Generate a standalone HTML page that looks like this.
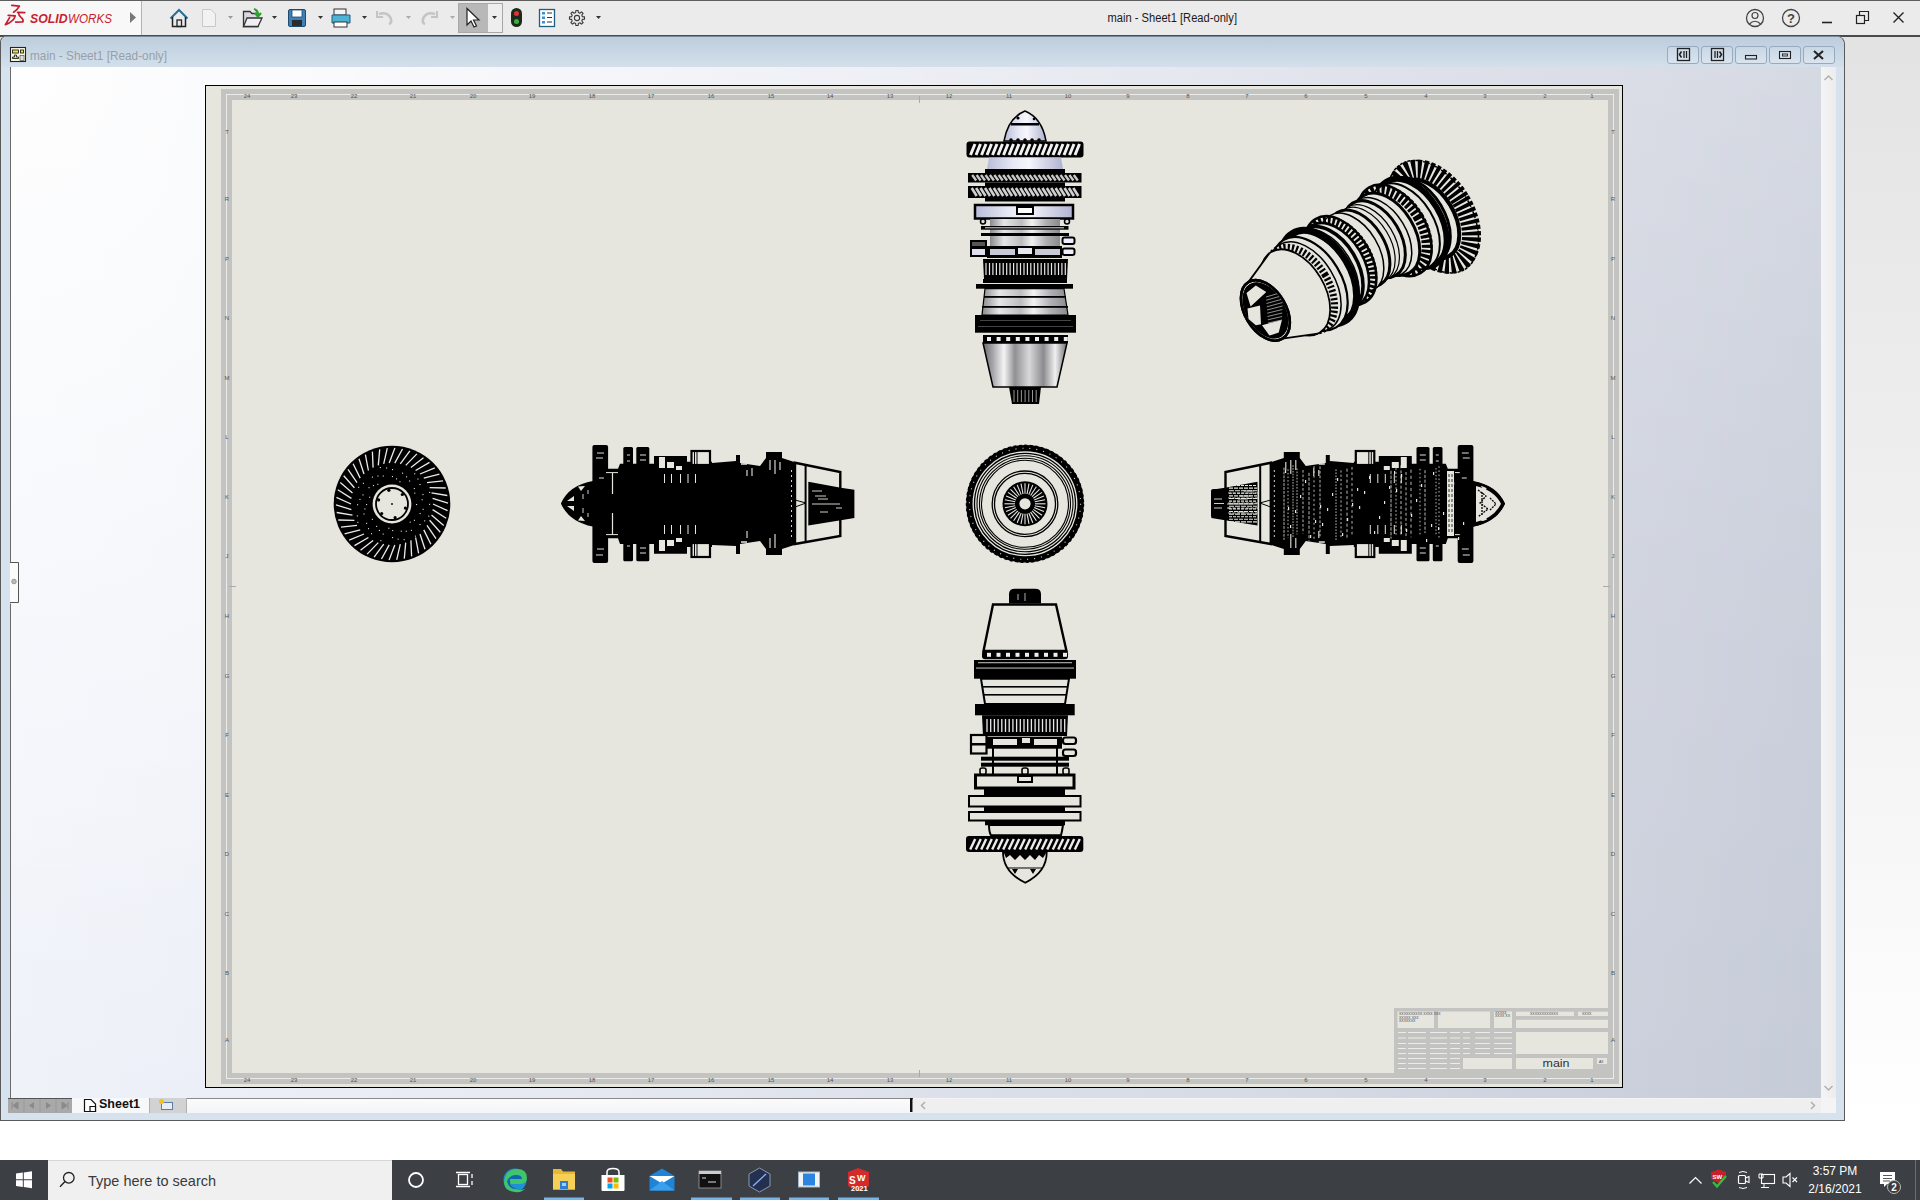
<!DOCTYPE html>
<html><head><meta charset="utf-8">
<style>
*{margin:0;padding:0;box-sizing:border-box}
html,body{width:1920px;height:1200px;overflow:hidden;font-family:"Liberation Sans",sans-serif}
body{position:relative;background:linear-gradient(#e2e2e2 0px,#e9e9e9 250px,#f6f6f6 800px,#ffffff 1120px)}
.a{position:absolute}
svg{position:absolute;overflow:visible}
#topbar{left:0;top:0;width:1920px;height:37px;background:#ebebeb;border-top:1px solid #5e5e5e;border-bottom:2px solid #4b4b4b}
#logo{left:0;top:1px;width:142px;height:34px;background:#f8f8f8;border-right:1px solid #b4b4b4}
#title{left:1000px;top:11px;width:344px;text-align:center;font-size:12px;color:#1a1a1a;letter-spacing:-0.1px}
#docwin{left:0;top:36px;width:1845px;height:1085px;background:#d6e2ee;border:1px solid #5a5a5a;border-top:1px solid #7a8a9a;border-radius:6px 8px 0 0}
#doctitle{left:1px;top:37px;width:1843px;height:30px;background:linear-gradient(#bdcddd,#d3e0ec);border-radius:6px 8px 0 0}
#doctext{left:30px;top:48px;font-size:12.5px;color:#8c96a0}
#gfx{left:10px;top:67px;width:1811px;height:1031px;border-left:1px solid #6a6a6a;
 background:
 linear-gradient(180deg,rgba(255,255,255,0.28) 0%,rgba(255,255,255,0.1) 50%,rgba(255,255,255,0) 100%),
 radial-gradient(ellipse 1350px 1500px at 0px 0px,rgba(255,255,255,0.9) 0%,rgba(255,255,255,0.5) 45%,rgba(255,255,255,0.15) 80%,rgba(255,255,255,0) 100%),
 linear-gradient(90deg,#e9edf7 0%,#e6eaf4 10%,#dfe3ed 40%,#d6dae5 70%,#cdd1dd 88%,#c6cbd8 100%)}
#vscroll{left:1821px;top:67px;width:15px;height:1031px;background:linear-gradient(90deg,#f4f4f4,#ececec)}
#tabbar{left:11px;top:1098px;width:1825px;height:15px;background:#f4f4f4}
#sheet{left:205px;top:85px;width:1418px;height:1003px;background:#e6e6df;border:1px solid #000}
#taskbar{left:0;top:1160px;width:1920px;height:40px;background:#3c4045}
#search{left:48px;top:1160px;width:344px;height:40px;background:#f0f0f0;border-left:1px solid #d8d8d8}
.wb{position:absolute;top:46px;width:32px;height:18px;border:1px solid #98aac0;border-radius:3px;background:linear-gradient(#c9d7e5,#d9e4ef)}
</style></head>
<body>
<div id="topbar" class="a"></div>
<div id="logo" class="a"></div>
<!-- logo -->
<svg style="left:0;top:0" width="142" height="36">
 <g fill="none" stroke="#c41e2e" stroke-width="1.7" stroke-linecap="round" stroke-linejoin="round">
  <path d="M11.8 5.4 L19.4 6.2 Q17.5 9.8 13.6 12.2"/>
  <path d="M8.2 15.3 L15.2 15.9 Q14 21.5 5.4 24.6 L9.6 17.6"/>
  <path d="M17.6 12.4 L24.8 12.6"/>
  <path d="M18.6 13.2 Q18.8 15.8 21.3 17.6 Q23.8 19.6 22.8 21.9 L15.6 22.1"/>
 </g>
 <text x="30" y="23" font-family="Liberation Sans" font-size="13" font-weight="bold" font-style="italic" fill="#c8202f" textLength="37.5" lengthAdjust="spacingAndGlyphs">SOLID</text>
 <text x="68" y="23" font-family="Liberation Sans" font-size="13" font-style="italic" fill="#c8202f" textLength="44" lengthAdjust="spacingAndGlyphs">WORKS</text>
 <path d="M130 12 L136 17.5 L130 23 Z" fill="#777"/>
</svg>
<!-- toolbar icons -->
<svg style="left:0;top:0" width="620" height="36">
 <!-- home -->
 <path d="M170.5 18.5 L179 10 L187.5 18.5" fill="none" stroke="#2a6d96" stroke-width="2"/>
 <path d="M172.5 17 V26.5 H185.5 V17" fill="none" stroke="#222" stroke-width="1.5"/>
 <rect x="177" y="20" width="4.5" height="6.5" fill="none" stroke="#222" stroke-width="1.3"/>
 <!-- new (disabled) -->
 <path d="M202.5 9.5 H211 L215.5 14 V26.5 H202.5 Z" fill="#f2f2f2" stroke="#c8c8c8"/>
 <path d="M228 16 h5 l-2.5 3z" fill="#9a9a9a"/>
 <!-- open -->
 <path d="M243.5 11.5 H250 L252 13.5 H258 V26.5 H243.5 Z" fill="#d8d8e0" stroke="#333" stroke-width="1.3"/>
 <path d="M247 18 H262 L258 26.5 H243.5 Z" fill="#f0f0f4" stroke="#333" stroke-width="1.3"/>
 <path d="M254 9 Q258 10 258 15 M255 13 L258 16.5 L261 13" fill="none" stroke="#2aa32a" stroke-width="2.2"/>
 <path d="M272 16 h5 l-2.5 3z" fill="#333"/>
 <!-- save -->
 <rect x="288.5" y="9.5" width="17" height="17" rx="1.5" fill="#3d7fb6" stroke="#1f4b70"/>
 <rect x="292" y="10" width="10" height="7" fill="#fff" stroke="#1f4b70" stroke-width="0.8"/>
 <rect x="292" y="20" width="10" height="6" fill="#2b2b2b"/>
 <path d="M318 16 h5 l-2.5 3z" fill="#333"/>
 <!-- print -->
 <rect x="334" y="9" width="12" height="6" fill="#f4f4f4" stroke="#333"/>
 <path d="M332 15 H350 V23 H332 Z" fill="#4ab3d6" stroke="#1f5f80"/>
 <rect x="334" y="22" width="13" height="5" fill="#fff" stroke="#333"/>
 <path d="M362 16 h5 l-2.5 3z" fill="#333"/>
 <!-- undo/redo disabled -->
 <path d="M379 14 Q388 11 391 19 Q392 23 389 24" fill="none" stroke="#c4c4c4" stroke-width="2.5"/>
 <path d="M377 11 V17 H383" fill="none" stroke="#c4c4c4" stroke-width="2"/>
 <path d="M406 16 h5 l-2.5 3z" fill="#aaa"/>
 <path d="M435 14 Q426 11 423 19 Q422 23 425 24" fill="none" stroke="#c4c4c4" stroke-width="2.5"/>
 <path d="M437 11 V17 H431" fill="none" stroke="#c4c4c4" stroke-width="2"/>
 <path d="M450 16 h5 l-2.5 3z" fill="#aaa"/>
 <!-- select pressed -->
 <rect x="458.5" y="3.5" width="44" height="29" fill="#eeeeee" stroke="#a8a8a8"/>
 <rect x="459" y="4" width="29" height="28" fill="#b8b8b8"/>
 <path d="M467 8.5 V25 L471 21 L474 27 L476.5 26 L473.5 20 L479 20 Z" fill="#fff" stroke="#222" stroke-width="1.2"/>
 <path d="M492 16 h5 l-2.5 3z" fill="#333"/>
 <!-- traffic light -->
 <rect x="511" y="8" width="11" height="19" rx="5.5" fill="#1b2a1b"/>
 <circle cx="516.5" cy="13.5" r="2.5" fill="#e23030"/>
 <circle cx="516.5" cy="21.5" r="2.5" fill="#3cb03c"/>
 <!-- list -->
 <rect x="539.5" y="9.5" width="15" height="17" fill="#fff" stroke="#1f5f80" stroke-width="1.3"/>
 <rect x="542" y="12" width="3" height="2.5" fill="#3d8fd0"/><rect x="542" y="16.5" width="3" height="2.5" fill="#3d8fd0"/><rect x="542" y="21" width="3" height="2.5" fill="#3d8fd0"/>
 <path d="M547 13 H552 M547 17.5 H552 M547 22 H552" stroke="#333" stroke-width="1"/>
 <!-- gear -->
 <path d="M582.44 16.67 L584.51 16.86 L584.51 19.14 L582.44 19.33 L581.79 20.91 L583.12 22.51 L581.51 24.12 L579.91 22.79 L578.33 23.44 L578.14 25.51 L575.86 25.51 L575.67 23.44 L574.09 22.79 L572.49 24.12 L570.88 22.51 L572.21 20.91 L571.56 19.33 L569.49 19.14 L569.49 16.86 L571.56 16.67 L572.21 15.09 L570.88 13.49 L572.49 11.88 L574.09 13.21 L575.67 12.56 L575.86 10.49 L578.14 10.49 L578.33 12.56 L579.91 13.21 L581.51 11.88 L583.12 13.49 L581.79 15.09 Z" fill="none" stroke="#3a3a3a" stroke-width="1.1" stroke-linejoin="round"/>
 <circle cx="577" cy="18" r="2.6" fill="none" stroke="#3a3a3a" stroke-width="1.1"/>
 <path d="M596 16 h5 l-2.5 3z" fill="#333"/>
</svg>
<svg style="left:1100px;top:0" width="150" height="36"><text x="7.5" y="21.5" font-family="Liberation Sans" font-size="12.5" fill="#1a1a1a" textLength="129.5" lengthAdjust="spacingAndGlyphs">main - Sheet1 [Read-only]</text></svg>
<!-- right top icons -->
<svg style="left:1730px;top:0" width="190" height="36">
 <circle cx="25" cy="18" r="8.5" fill="none" stroke="#444" stroke-width="1.3"/>
 <circle cx="25" cy="15.5" r="3" fill="none" stroke="#444" stroke-width="1.2"/>
 <path d="M19 24.5 Q25 18 31 24.5" fill="none" stroke="#444" stroke-width="1.2"/>
 <circle cx="61" cy="18" r="8.5" fill="none" stroke="#444" stroke-width="1.3"/>
 <text x="57" y="22.5" font-size="13" font-weight="bold" fill="#444" font-family="Liberation Sans">?</text>
 <path d="M92 22.5 H102" stroke="#222" stroke-width="1.6"/>
 <rect x="126.5" y="15.5" width="8" height="8" fill="none" stroke="#222" stroke-width="1.2"/>
 <path d="M129.5 15.5 V11.5 H138.5 V20.5 H134.5" fill="none" stroke="#222" stroke-width="1.2"/>
 <path d="M163.5 12.5 L173.5 22.5 M173.5 12.5 L163.5 22.5" stroke="#222" stroke-width="1.4"/>
</svg>
<div id="docwin" class="a"></div>
<div id="doctitle" class="a"></div>
<svg style="left:10px;top:47px" width="17" height="16">
 <rect x="0.5" y="0.5" width="15" height="14" fill="#fcfbe6" stroke="#222" stroke-width="1.1"/>
 <rect x="2.5" y="3" width="6" height="3" fill="#f2e640" stroke="#222" stroke-width="0.9"/>
 <rect x="10.5" y="3" width="3" height="3" fill="#f2e640" stroke="#222" stroke-width="0.9"/>
 <path d="M2.5 11.5 H8.5 V10 H6.5 V8 H4.5 V10 H2.5 Z" fill="#f2e640" stroke="#222" stroke-width="0.9"/>
 <rect x="10" y="8.5" width="4" height="5" fill="#ddd" stroke="#555" stroke-width="0.7"/>
</svg>
<svg style="left:0;top:37px" width="200" height="30"><text x="30" y="23" font-family="Liberation Sans" font-size="13" fill="#97a0aa" textLength="137" lengthAdjust="spacingAndGlyphs">main - Sheet1 [Read-only]</text></svg>
<div class="wb" style="left:1667px"></div>
<div class="wb" style="left:1701px"></div>
<div class="wb" style="left:1735px"></div>
<div class="wb" style="left:1769px"></div>
<div class="wb" style="left:1803px"></div>
<svg style="left:1660px;top:44px" width="180" height="22">
 <g fill="none" stroke="#222" stroke-width="1.3">
  <rect x="17.5" y="4.5" width="12" height="12"/><path d="M24 7 V14 M26.5 7 V14"/><path d="M21.5 7.5 L19.5 10.5 L21.5 13.5" stroke-width="1.6"/>
  <rect x="51.5" y="4.5" width="12" height="12"/><path d="M55 7 V14 M57.5 7 V14"/><path d="M59.5 7.5 L61.5 10.5 L59.5 13.5" stroke-width="1.6"/>
  <rect x="85.5" y="11.5" width="11" height="3.5" stroke-width="1.1"/>
  <rect x="119.5" y="7.5" width="11" height="7" stroke-width="1.1"/><rect x="122.5" y="10" width="5" height="2" stroke-width="0.9"/>
  <path d="M154 7 L163 15 M163 7 L154 15" stroke-width="2"/>
 </g>
</svg>
<div id="gfx" class="a"></div>
<div id="vscroll" class="a"></div>
<svg style="left:1821px;top:67px" width="15" height="1031">
 <path d="M3.5 13 L7.5 9 L11.5 13" fill="none" stroke="#b0b0b0" stroke-width="1.5"/>
 <path d="M3.5 1019 L7.5 1023 L11.5 1019" fill="none" stroke="#b0b0b0" stroke-width="1.5"/>
</svg>
<!-- left panel handle -->
<svg style="left:10px;top:562px" width="12" height="42">
 <path d="M0.5 0 V41.5" stroke="#fafafa" stroke-width="1"/>
 <path d="M0 0.5 H8.5 V40.5 H0" fill="#fbfbfb" stroke="#555" stroke-width="1"/>
 <circle cx="4" cy="19.5" r="2.3" fill="#bbb" stroke="#888" stroke-width="0.8"/>
</svg>
<div id="tabbar" class="a"></div>
<div class="a" style="left:8px;top:1098px;width:64px;height:15px;background:#a9a9a9;border-top:1px solid #555"></div>
<svg style="left:8px;top:1098px" width="64" height="15">
 <g fill="#8a8a8a"><path d="M4 4 V11 M5 7.5 L10 4 V11 Z" stroke="#8a8a8a"/><path d="M21 7.5 L26 4 V11 Z"/><path d="M38 4 L43 7.5 L38 11 Z"/><path d="M54 4 L59 7.5 L54 11 Z M60 4 V11" stroke="#8a8a8a"/></g>
 <path d="M16 1 V15 M32 1 V15 M48 1 V15" stroke="#999" stroke-width="1"/>
</svg>
<div class="a" style="left:72px;top:1098px;width:77px;height:15px;background:#f6f8fa"></div>
<svg style="left:83px;top:1098px" width="16" height="16">
 <path d="M1.5 1.5 H8 L12.5 6 V13.5 H1.5 Z" fill="#fff" stroke="#111" stroke-width="1.2"/>
 <path d="M7 8.5 H12.5 V13.5 H7 Z" fill="#fff" stroke="#111" stroke-width="1.2"/>
</svg>
<div class="a" style="left:99px;top:1097px;font-size:12.5px;font-weight:bold;color:#111">Sheet1</div>
<div class="a" style="left:149px;top:1098px;width:38px;height:15px;background:#d2d2d2;border-left:1px solid #b0b0b0;border-right:1px solid #b0b0b0"></div>
<svg style="left:158px;top:1098px" width="20" height="15">
 <rect x="3.5" y="4.5" width="11" height="7" fill="#e8eef4" stroke="#5a7ea8"/>
 <circle cx="3.5" cy="3.5" r="2.5" fill="#f5c020"/>
</svg>
<div class="a" style="left:187px;top:1098px;width:723px;height:15px;background:linear-gradient(#fbfbfb,#f3f5f8);border-top:1px solid #8a8a8a"></div>
<div class="a" style="left:910px;top:1098px;width:3px;height:14px;border:2px solid #111;border-bottom:none;border-right:1px solid #888"></div>
<div class="a" style="left:913px;top:1099px;width:908px;height:14px;background:#efefef"></div>
<svg style="left:913px;top:1098px" width="908" height="15">
 <path d="M12 4 L8.5 7.5 L12 11" fill="none" stroke="#b0b0b0" stroke-width="1.5"/>
 <path d="M898 4 L901.5 7.5 L898 11" fill="none" stroke="#b0b0b0" stroke-width="1.5"/>
</svg>
<div id="sheet" class="a"></div>
<svg style="left:0;top:0" width="1920" height="1200">
<rect x="223.5" y="91.5" width="1393" height="990" fill="none" stroke="#c3c3c1" stroke-width="5"/>
<rect x="226.5" y="94.5" width="1387" height="984" fill="none" stroke="#ecece8" stroke-width="1"/>
<rect x="229.5" y="97.5" width="1381" height="978" fill="none" stroke="#c3c3c1" stroke-width="5"/>
<g font-family="Liberation Sans" font-size="6" fill="#555" text-anchor="middle">
<text x="247" y="97.5">24</text>
<text x="247" y="1081.5">24</text>
<text x="294" y="97.5">23</text>
<text x="294" y="1081.5">23</text>
<text x="354" y="97.5">22</text>
<text x="354" y="1081.5">22</text>
<text x="413" y="97.5">21</text>
<text x="413" y="1081.5">21</text>
<text x="473" y="97.5">20</text>
<text x="473" y="1081.5">20</text>
<text x="532" y="97.5">19</text>
<text x="532" y="1081.5">19</text>
<text x="592" y="97.5">18</text>
<text x="592" y="1081.5">18</text>
<text x="651" y="97.5">17</text>
<text x="651" y="1081.5">17</text>
<text x="711" y="97.5">16</text>
<text x="711" y="1081.5">16</text>
<text x="771" y="97.5">15</text>
<text x="771" y="1081.5">15</text>
<text x="830" y="97.5">14</text>
<text x="830" y="1081.5">14</text>
<text x="890" y="97.5">13</text>
<text x="890" y="1081.5">13</text>
<text x="949" y="97.5">12</text>
<text x="949" y="1081.5">12</text>
<text x="1009" y="97.5">11</text>
<text x="1009" y="1081.5">11</text>
<text x="1068" y="97.5">10</text>
<text x="1068" y="1081.5">10</text>
<text x="1128" y="97.5">9</text>
<text x="1128" y="1081.5">9</text>
<text x="1188" y="97.5">8</text>
<text x="1188" y="1081.5">8</text>
<text x="1247" y="97.5">7</text>
<text x="1247" y="1081.5">7</text>
<text x="1306" y="97.5">6</text>
<text x="1306" y="1081.5">6</text>
<text x="1366" y="97.5">5</text>
<text x="1366" y="1081.5">5</text>
<text x="1426" y="97.5">4</text>
<text x="1426" y="1081.5">4</text>
<text x="1485" y="97.5">3</text>
<text x="1485" y="1081.5">3</text>
<text x="1545" y="97.5">2</text>
<text x="1545" y="1081.5">2</text>
<text x="1592" y="97.5">1</text>
<text x="1592" y="1081.5">1</text>
<text x="227" y="134">T</text>
<text x="1613" y="134">T</text>
<text x="227" y="201">R</text>
<text x="1613" y="201">R</text>
<text x="227" y="261">P</text>
<text x="1613" y="261">P</text>
<text x="227" y="320">N</text>
<text x="1613" y="320">N</text>
<text x="227" y="380">M</text>
<text x="1613" y="380">M</text>
<text x="227" y="439">L</text>
<text x="1613" y="439">L</text>
<text x="227" y="499">K</text>
<text x="1613" y="499">K</text>
<text x="227" y="558">J</text>
<text x="1613" y="558">J</text>
<text x="227" y="618">H</text>
<text x="1613" y="618">H</text>
<text x="227" y="678">G</text>
<text x="1613" y="678">G</text>
<text x="227" y="737">F</text>
<text x="1613" y="737">F</text>
<text x="227" y="797">E</text>
<text x="1613" y="797">E</text>
<text x="227" y="856">D</text>
<text x="1613" y="856">D</text>
<text x="227" y="916">C</text>
<text x="1613" y="916">C</text>
<text x="227" y="975">B</text>
<text x="1613" y="975">B</text>
<text x="227" y="1042">A</text>
<text x="1613" y="1042">A</text>
</g>
<path d="M919.5 96 V103 M919.5 1070 V1077 M229 586.5 H236 M1603 586.5 H1610" stroke="#aaa" stroke-width="1"/>
</svg>
<svg style="left:0;top:0" width="1920" height="1200">
<defs>
<linearGradient id="blu" x1="0" x2="1" y1="0" y2="0">
 <stop offset="0" stop-color="#b8bcd8"/><stop offset="0.35" stop-color="#e8e9f6"/><stop offset="0.55" stop-color="#f6f6fc"/><stop offset="1" stop-color="#aeb2d0"/></linearGradient>
<linearGradient id="met" x1="0" x2="1" y1="0" y2="0">
 <stop offset="0" stop-color="#6a6a6e"/><stop offset="0.12" stop-color="#a8a8ac"/><stop offset="0.25" stop-color="#f4f4f4"/><stop offset="0.38" stop-color="#909094"/><stop offset="0.55" stop-color="#d8d8da"/><stop offset="0.72" stop-color="#8c8c90"/><stop offset="0.86" stop-color="#f0f0f0"/><stop offset="1" stop-color="#707074"/></linearGradient>
<linearGradient id="met2" x1="0" x2="1" y1="0" y2="0">
 <stop offset="0" stop-color="#8a8a8e"/><stop offset="0.2" stop-color="#e6e6e8"/><stop offset="0.45" stop-color="#bdbdc0"/><stop offset="0.6" stop-color="#f2f2f2"/><stop offset="0.8" stop-color="#b0b0b4"/><stop offset="1" stop-color="#8a8a8e"/></linearGradient>
</defs>
<path d="M1004 141 Q1008 118 1025 111 Q1042 118 1046 141 Z" fill="url(#blu)" stroke="#000" stroke-width="1.5"/>
<rect x="1011" y="123" width="28" height="2.5" fill="#000" />
<circle cx="1011" cy="140" r="1.8" fill="#000"/>
<circle cx="1018" cy="140" r="1.8" fill="#000"/>
<circle cx="1025" cy="140" r="1.8" fill="#000"/>
<circle cx="1032" cy="140" r="1.8" fill="#000"/>
<circle cx="1039" cy="140" r="1.8" fill="#000"/>
<circle cx="1018" cy="118" r="1.6" fill="#000"/><circle cx="1034" cy="119" r="1.3" fill="#000"/>
<rect x="966.5" y="141.5" width="117" height="16" rx="3" fill="#000"/>
<g clip-path="none">
<path d="M975.0 144 L970.5 155" stroke="#f2f2f2" stroke-width="3.0"/>
<path d="M980.5 144 L976.0 155" stroke="#f2f2f2" stroke-width="3.0"/>
<path d="M986.0 144 L981.5 155" stroke="#f2f2f2" stroke-width="3.0"/>
<path d="M991.5 144 L987.0 155" stroke="#f2f2f2" stroke-width="3.0"/>
<path d="M997.0 144 L992.5 155" stroke="#f2f2f2" stroke-width="3.0"/>
<path d="M1002.5 144 L998.0 155" stroke="#f2f2f2" stroke-width="3.0"/>
<path d="M1008.0 144 L1003.5 155" stroke="#f2f2f2" stroke-width="3.0"/>
<path d="M1013.5 144 L1009.0 155" stroke="#f2f2f2" stroke-width="3.0"/>
<path d="M1019.0 144 L1014.5 155" stroke="#f2f2f2" stroke-width="3.0"/>
<path d="M1024.5 144 L1020.0 155" stroke="#f2f2f2" stroke-width="3.0"/>
<path d="M1030.0 144 L1025.5 155" stroke="#f2f2f2" stroke-width="3.0"/>
<path d="M1035.5 144 L1031.0 155" stroke="#f2f2f2" stroke-width="3.0"/>
<path d="M1041.0 144 L1036.5 155" stroke="#f2f2f2" stroke-width="3.0"/>
<path d="M1046.5 144 L1042.0 155" stroke="#f2f2f2" stroke-width="3.0"/>
<path d="M1052.0 144 L1047.5 155" stroke="#f2f2f2" stroke-width="3.0"/>
<path d="M1057.5 144 L1053.0 155" stroke="#f2f2f2" stroke-width="3.0"/>
<path d="M1063.0 144 L1058.5 155" stroke="#f2f2f2" stroke-width="3.0"/>
<path d="M1068.5 144 L1064.0 155" stroke="#f2f2f2" stroke-width="3.0"/>
<path d="M1074.0 144 L1069.5 155" stroke="#f2f2f2" stroke-width="3.0"/>
<path d="M1079.5 144 L1075.0 155" stroke="#f2f2f2" stroke-width="3.0"/>
</g>
<path d="M989 157.5 H1061 L1063 169 H987 Z" fill="url(#blu)"/>
<rect x="985" y="169" width="80" height="4.5" fill="#000" />
<rect x="968" y="173" width="113.5" height="9.5" fill="#000"/>
<path d="M972.2 175 L976.2 180.5" stroke="#c8c8c8" stroke-width="2.4"/>
<path d="M976.6 175 L980.6 180.5" stroke="#c8c8c8" stroke-width="2.4"/>
<path d="M981.0 175 L985.0 180.5" stroke="#c8c8c8" stroke-width="2.4"/>
<path d="M985.5 175 L989.5 180.5" stroke="#c8c8c8" stroke-width="2.4"/>
<path d="M989.9 175 L993.9 180.5" stroke="#c8c8c8" stroke-width="2.4"/>
<path d="M994.3 175 L998.3 180.5" stroke="#c8c8c8" stroke-width="2.4"/>
<path d="M998.7 175 L1002.7 180.5" stroke="#c8c8c8" stroke-width="2.4"/>
<path d="M1003.1 175 L1007.1 180.5" stroke="#c8c8c8" stroke-width="2.4"/>
<path d="M1007.5 175 L1011.5 180.5" stroke="#c8c8c8" stroke-width="2.4"/>
<path d="M1012.0 175 L1016.0 180.5" stroke="#c8c8c8" stroke-width="2.4"/>
<path d="M1016.4 175 L1020.4 180.5" stroke="#c8c8c8" stroke-width="2.4"/>
<path d="M1020.8 175 L1024.8 180.5" stroke="#c8c8c8" stroke-width="2.4"/>
<path d="M1025.2 175 L1029.2 180.5" stroke="#c8c8c8" stroke-width="2.4"/>
<path d="M1029.6 175 L1033.6 180.5" stroke="#c8c8c8" stroke-width="2.4"/>
<path d="M1034.0 175 L1038.0 180.5" stroke="#c8c8c8" stroke-width="2.4"/>
<path d="M1038.5 175 L1042.5 180.5" stroke="#c8c8c8" stroke-width="2.4"/>
<path d="M1042.9 175 L1046.9 180.5" stroke="#c8c8c8" stroke-width="2.4"/>
<path d="M1047.3 175 L1051.3 180.5" stroke="#c8c8c8" stroke-width="2.4"/>
<path d="M1051.7 175 L1055.7 180.5" stroke="#c8c8c8" stroke-width="2.4"/>
<path d="M1056.1 175 L1060.1 180.5" stroke="#c8c8c8" stroke-width="2.4"/>
<path d="M1060.5 175 L1064.5 180.5" stroke="#c8c8c8" stroke-width="2.4"/>
<path d="M1065.0 175 L1069.0 180.5" stroke="#c8c8c8" stroke-width="2.4"/>
<path d="M1069.4 175 L1073.4 180.5" stroke="#c8c8c8" stroke-width="2.4"/>
<path d="M1073.8 175 L1077.8 180.5" stroke="#c8c8c8" stroke-width="2.4"/>
<rect x="985" y="182.5" width="80" height="4.0" fill="#000" />
<rect x="968" y="186" width="113.5" height="12" fill="#000"/>
<path d="M971.7 188 L976.7 196" stroke="#d0d0d0" stroke-width="2.6"/>
<path d="M976.1 188 L981.1 196" stroke="#d0d0d0" stroke-width="2.6"/>
<path d="M980.5 188 L985.5 196" stroke="#d0d0d0" stroke-width="2.6"/>
<path d="M985.0 188 L990.0 196" stroke="#d0d0d0" stroke-width="2.6"/>
<path d="M989.4 188 L994.4 196" stroke="#d0d0d0" stroke-width="2.6"/>
<path d="M993.8 188 L998.8 196" stroke="#d0d0d0" stroke-width="2.6"/>
<path d="M998.2 188 L1003.2 196" stroke="#d0d0d0" stroke-width="2.6"/>
<path d="M1002.6 188 L1007.6 196" stroke="#d0d0d0" stroke-width="2.6"/>
<path d="M1007.0 188 L1012.0 196" stroke="#d0d0d0" stroke-width="2.6"/>
<path d="M1011.5 188 L1016.5 196" stroke="#d0d0d0" stroke-width="2.6"/>
<path d="M1015.9 188 L1020.9 196" stroke="#d0d0d0" stroke-width="2.6"/>
<path d="M1020.3 188 L1025.3 196" stroke="#d0d0d0" stroke-width="2.6"/>
<path d="M1024.7 188 L1029.7 196" stroke="#d0d0d0" stroke-width="2.6"/>
<path d="M1029.1 188 L1034.1 196" stroke="#d0d0d0" stroke-width="2.6"/>
<path d="M1033.5 188 L1038.5 196" stroke="#d0d0d0" stroke-width="2.6"/>
<path d="M1038.0 188 L1043.0 196" stroke="#d0d0d0" stroke-width="2.6"/>
<path d="M1042.4 188 L1047.4 196" stroke="#d0d0d0" stroke-width="2.6"/>
<path d="M1046.8 188 L1051.8 196" stroke="#d0d0d0" stroke-width="2.6"/>
<path d="M1051.2 188 L1056.2 196" stroke="#d0d0d0" stroke-width="2.6"/>
<path d="M1055.6 188 L1060.6 196" stroke="#d0d0d0" stroke-width="2.6"/>
<path d="M1060.0 188 L1065.0 196" stroke="#d0d0d0" stroke-width="2.6"/>
<path d="M1064.5 188 L1069.5 196" stroke="#d0d0d0" stroke-width="2.6"/>
<path d="M1068.9 188 L1073.9 196" stroke="#d0d0d0" stroke-width="2.6"/>
<path d="M1073.3 188 L1078.3 196" stroke="#d0d0d0" stroke-width="2.6"/>
<rect x="985" y="198" width="80" height="3.5" fill="#000" />
<rect x="975" y="205" width="98" height="13.5" fill="url(#blu)" stroke="#000" stroke-width="2.5"/>
<rect x="1017" y="207" width="16" height="7" fill="#fff" stroke="#000" stroke-width="2"/>
<circle cx="983" cy="221.5" r="2.5" fill="#ddd" stroke="#000" stroke-width="1.5"/>
<circle cx="1025" cy="221.5" r="2.5" fill="#ddd" stroke="#000" stroke-width="1.5"/>
<circle cx="1067" cy="221.5" r="2.5" fill="#ddd" stroke="#000" stroke-width="1.5"/>
<rect x="990" y="219" width="70" height="27" fill="url(#met2)" />
<rect x="981" y="226" width="87.5" height="3.6999999999999886" fill="#000" />
<rect x="985" y="227.3" width="79" height="1.0" fill="#ddd" />
<rect x="981" y="233" width="88" height="3" fill="#000" />
<rect x="970" y="240" width="17" height="17" fill="#000"/>
<rect x="972" y="249" width="13" height="6" fill="#dde" />
<rect x="972" y="242" width="13" height="4" fill="#555" />
<rect x="1062.5" y="237.5" width="12" height="6.5" rx="2" fill="#eef" stroke="#000" stroke-width="2"/>
<rect x="1062.5" y="248.5" width="12" height="6.5" rx="2" fill="#eef" stroke="#000" stroke-width="2"/>
<rect x="987" y="246" width="75" height="12" fill="#000" />
<rect x="990" y="249" width="25" height="6" fill="#c8cad8" />
<rect x="1035" y="249" width="25" height="6" fill="#c8cad8" />
<rect x="1018" y="248" width="14" height="6" fill="#e8e8f0" />
<path d="M983 259 H1068 L1067 279 H984 Z" fill="#000"/>
<path d="M986.0 263 V275" stroke="#e8e8e8" stroke-width="1.2"/>
<path d="M989.5 263 V275" stroke="#e8e8e8" stroke-width="1.2"/>
<path d="M992.9 263 V275" stroke="#e8e8e8" stroke-width="1.2"/>
<path d="M996.4 263 V275" stroke="#e8e8e8" stroke-width="1.2"/>
<path d="M999.8 263 V275" stroke="#e8e8e8" stroke-width="1.2"/>
<path d="M1003.2 263 V275" stroke="#e8e8e8" stroke-width="1.2"/>
<path d="M1006.7 263 V275" stroke="#e8e8e8" stroke-width="1.2"/>
<path d="M1010.1 263 V275" stroke="#e8e8e8" stroke-width="1.2"/>
<path d="M1013.6 263 V275" stroke="#e8e8e8" stroke-width="1.2"/>
<path d="M1017.0 263 V275" stroke="#e8e8e8" stroke-width="1.2"/>
<path d="M1020.5 263 V275" stroke="#e8e8e8" stroke-width="1.2"/>
<path d="M1024.0 263 V275" stroke="#e8e8e8" stroke-width="1.2"/>
<path d="M1027.4 263 V275" stroke="#e8e8e8" stroke-width="1.2"/>
<path d="M1030.8 263 V275" stroke="#e8e8e8" stroke-width="1.2"/>
<path d="M1034.3 263 V275" stroke="#e8e8e8" stroke-width="1.2"/>
<path d="M1037.8 263 V275" stroke="#e8e8e8" stroke-width="1.2"/>
<path d="M1041.2 263 V275" stroke="#e8e8e8" stroke-width="1.2"/>
<path d="M1044.7 263 V275" stroke="#e8e8e8" stroke-width="1.2"/>
<path d="M1048.1 263 V275" stroke="#e8e8e8" stroke-width="1.2"/>
<path d="M1051.5 263 V275" stroke="#e8e8e8" stroke-width="1.2"/>
<path d="M1055.0 263 V275" stroke="#e8e8e8" stroke-width="1.2"/>
<path d="M1058.5 263 V275" stroke="#e8e8e8" stroke-width="1.2"/>
<path d="M1061.9 263 V275" stroke="#e8e8e8" stroke-width="1.2"/>
<path d="M1065.3 263 V275" stroke="#e8e8e8" stroke-width="1.2"/>
<rect x="983" y="279" width="84" height="4" fill="#000" />
<rect x="976" y="284" width="97" height="4.699999999999989" fill="#000" />
<path d="M985 288.7 H1064 L1068 315 H982 Z" fill="url(#met2)" stroke="#000" stroke-width="1.2"/>
<rect x="984" y="296" width="82" height="1.8000000000000114" fill="#000" />
<rect x="982" y="306" width="86" height="1.8000000000000114" fill="#000" />
<rect x="975" y="315" width="101" height="17.69999999999999" fill="#000" />
<rect x="980" y="320" width="91" height="1" fill="#444" />
<rect x="978" y="326" width="95" height="1" fill="#444" />
<rect x="983" y="335" width="85" height="8" fill="#000" />
<rect x="987.0" y="337" width="4" height="4" fill="#eee"/>
<rect x="996.6" y="337" width="4" height="4" fill="#eee"/>
<rect x="1006.2" y="337" width="4" height="4" fill="#eee"/>
<rect x="1015.8" y="337" width="4" height="4" fill="#eee"/>
<rect x="1025.4" y="337" width="4" height="4" fill="#eee"/>
<rect x="1035.0" y="337" width="4" height="4" fill="#eee"/>
<rect x="1044.6" y="337" width="4" height="4" fill="#eee"/>
<rect x="1054.2" y="337" width="4" height="4" fill="#eee"/>
<rect x="1063.8" y="337" width="4" height="4" fill="#eee"/>
<path d="M983 343 H1067 L1057 387 H993 Z" fill="url(#met)" stroke="#000" stroke-width="1.5"/>
<path d="M1009 387 H1041 L1039 404 H1012 Z" fill="#000"/>
<path d="M1014.0 390 V402" stroke="#bbb" stroke-width="0.8"/>
<path d="M1017.7 390 V402" stroke="#bbb" stroke-width="0.8"/>
<path d="M1021.4 390 V402" stroke="#bbb" stroke-width="0.8"/>
<path d="M1025.1 390 V402" stroke="#bbb" stroke-width="0.8"/>
<path d="M1028.8 390 V402" stroke="#bbb" stroke-width="0.8"/>
<path d="M1032.5 390 V402" stroke="#bbb" stroke-width="0.8"/>
<path d="M1036.2 390 V402" stroke="#bbb" stroke-width="0.8"/>
<path d="M1009 603.5 V594 Q1009 588.7 1015 588.7 H1035 Q1041 588.7 1041 594 V603.5 Z" fill="#000"/>
<path d="M1018 594 V600 M1025 593 V601" stroke="#ddd" stroke-width="0.8"/>
<path d="M993 604.5 H1056 L1066.5 651 H983.5 Z" fill="#e6e6df" stroke="#000" stroke-width="2.4"/>
<rect x="982" y="650.7" width="86" height="8.6" rx="3" fill="#000"/>
<rect x="987.0" y="652.8" width="4" height="4" fill="#eee"/>
<rect x="996.5" y="652.8" width="4" height="4" fill="#eee"/>
<rect x="1006.0" y="652.8" width="4" height="4" fill="#eee"/>
<rect x="1015.5" y="652.8" width="4" height="4" fill="#eee"/>
<rect x="1025.0" y="652.8" width="4" height="4" fill="#eee"/>
<rect x="1034.5" y="652.8" width="4" height="4" fill="#eee"/>
<rect x="1044.0" y="652.8" width="4" height="4" fill="#eee"/>
<rect x="1053.5" y="652.8" width="4" height="4" fill="#eee"/>
<rect x="1063.0" y="652.8" width="4" height="4" fill="#eee"/>
<rect x="974" y="660" width="102" height="18.700000000000045" fill="#000" />
<rect x="978" y="662.3" width="94" height="0.900000000000091" fill="#ddd" />
<rect x="976" y="667.6" width="98" height="0.8999999999999773" fill="#ddd" />
<path d="M981 678.7 H1069 L1065 704 H985 Z" fill="#e6e6df" stroke="#000" stroke-width="2"/>
<rect x="983" y="686" width="84" height="1.6000000000000227" fill="#000" />
<rect x="984" y="694" width="82" height="1.6000000000000227" fill="#000" />
<rect x="975" y="704" width="99.70000000000005" height="11.299999999999955" fill="#000" />
<path d="M982 715.3 H1068 L1067 736 H983 Z" fill="#000"/>
<path d="M987.0 719 V732" stroke="#e8e8e8" stroke-width="1.3"/>
<path d="M990.7 719 V732" stroke="#e8e8e8" stroke-width="1.3"/>
<path d="M994.4 719 V732" stroke="#e8e8e8" stroke-width="1.3"/>
<path d="M998.1 719 V732" stroke="#e8e8e8" stroke-width="1.3"/>
<path d="M1001.8 719 V732" stroke="#e8e8e8" stroke-width="1.3"/>
<path d="M1005.5 719 V732" stroke="#e8e8e8" stroke-width="1.3"/>
<path d="M1009.2 719 V732" stroke="#e8e8e8" stroke-width="1.3"/>
<path d="M1012.9 719 V732" stroke="#e8e8e8" stroke-width="1.3"/>
<path d="M1016.6 719 V732" stroke="#e8e8e8" stroke-width="1.3"/>
<path d="M1020.3 719 V732" stroke="#e8e8e8" stroke-width="1.3"/>
<path d="M1024.0 719 V732" stroke="#e8e8e8" stroke-width="1.3"/>
<path d="M1027.7 719 V732" stroke="#e8e8e8" stroke-width="1.3"/>
<path d="M1031.4 719 V732" stroke="#e8e8e8" stroke-width="1.3"/>
<path d="M1035.1 719 V732" stroke="#e8e8e8" stroke-width="1.3"/>
<path d="M1038.8 719 V732" stroke="#e8e8e8" stroke-width="1.3"/>
<path d="M1042.5 719 V732" stroke="#e8e8e8" stroke-width="1.3"/>
<path d="M1046.2 719 V732" stroke="#e8e8e8" stroke-width="1.3"/>
<path d="M1049.9 719 V732" stroke="#e8e8e8" stroke-width="1.3"/>
<path d="M1053.6 719 V732" stroke="#e8e8e8" stroke-width="1.3"/>
<path d="M1057.3 719 V732" stroke="#e8e8e8" stroke-width="1.3"/>
<path d="M1061.0 719 V732" stroke="#e8e8e8" stroke-width="1.3"/>
<path d="M1064.7 719 V732" stroke="#e8e8e8" stroke-width="1.3"/>
<rect x="971" y="735" width="15.5" height="18.5" fill="#e6e6df" stroke="#000" stroke-width="2.2"/>
<rect x="972" y="743" width="14" height="2.5" fill="#000" />
<rect x="1063" y="737.5" width="13" height="6.5" rx="2.5" fill="#e6e6df" stroke="#000" stroke-width="2.2"/>
<rect x="1063" y="749.5" width="13" height="6.5" rx="2.5" fill="#e6e6df" stroke="#000" stroke-width="2.2"/>
<rect x="987" y="736.7" width="75" height="12.0" fill="#000" />
<rect x="993" y="739" width="24" height="6" fill="#e6e6df" />
<rect x="1034" y="739" width="23" height="6" fill="#e6e6df" />
<rect x="1022" y="738" width="8" height="5" fill="#e6e6df" />
<rect x="981" y="756.7" width="88" height="4.0" fill="#000" />
<rect x="981" y="762.7" width="88" height="4.0" fill="#000" />
<rect x="992" y="746" width="2" height="28" fill="#000" />
<rect x="1056" y="746" width="2" height="28" fill="#000" />
<rect x="980" y="768" width="6" height="6.5" rx="2" fill="#e6e6df" stroke="#000" stroke-width="1.6"/>
<rect x="1022" y="768" width="6" height="6.5" rx="2" fill="#e6e6df" stroke="#000" stroke-width="1.6"/>
<rect x="1063" y="768" width="6" height="6.5" rx="2" fill="#e6e6df" stroke="#000" stroke-width="1.6"/>
<rect x="975.5" y="775" width="98.5" height="13" fill="#e6e6df" stroke="#000" stroke-width="3"/>
<rect x="1018" y="776" width="14" height="6" fill="#e6e6df" stroke="#000" stroke-width="2"/>
<rect x="984" y="788.7" width="81" height="8.0" fill="#000" />
<rect x="969" y="796" width="111.5" height="10.5" fill="#e6e6df" stroke="#000" stroke-width="2"/>
<rect x="984" y="807" width="81" height="5" fill="#000" />
<rect x="969" y="812" width="111.5" height="8.5" fill="#e6e6df" stroke="#000" stroke-width="2"/>
<rect x="985" y="820.7" width="80" height="4.599999999999909" fill="#000" />
<path d="M989 825 H1063 Q1062 832 1061 835.3 H991 Q989 832 989 825 Z" fill="#e6e6df" stroke="#000" stroke-width="2"/>
<rect x="966" y="836" width="117.3" height="16" rx="3" fill="#000"/>
<path d="M975.2 839 L970.2 849.5" stroke="#ececec" stroke-width="2.4"/>
<path d="M980.8 839 L975.8 849.5" stroke="#ececec" stroke-width="2.4"/>
<path d="M986.2 839 L981.2 849.5" stroke="#ececec" stroke-width="2.4"/>
<path d="M991.8 839 L986.8 849.5" stroke="#ececec" stroke-width="2.4"/>
<path d="M997.2 839 L992.2 849.5" stroke="#ececec" stroke-width="2.4"/>
<path d="M1002.8 839 L997.8 849.5" stroke="#ececec" stroke-width="2.4"/>
<path d="M1008.2 839 L1003.2 849.5" stroke="#ececec" stroke-width="2.4"/>
<path d="M1013.8 839 L1008.8 849.5" stroke="#ececec" stroke-width="2.4"/>
<path d="M1019.2 839 L1014.2 849.5" stroke="#ececec" stroke-width="2.4"/>
<path d="M1024.8 839 L1019.8 849.5" stroke="#ececec" stroke-width="2.4"/>
<path d="M1030.2 839 L1025.2 849.5" stroke="#ececec" stroke-width="2.4"/>
<path d="M1035.8 839 L1030.8 849.5" stroke="#ececec" stroke-width="2.4"/>
<path d="M1041.2 839 L1036.2 849.5" stroke="#ececec" stroke-width="2.4"/>
<path d="M1046.8 839 L1041.8 849.5" stroke="#ececec" stroke-width="2.4"/>
<path d="M1052.2 839 L1047.2 849.5" stroke="#ececec" stroke-width="2.4"/>
<path d="M1057.8 839 L1052.8 849.5" stroke="#ececec" stroke-width="2.4"/>
<path d="M1063.2 839 L1058.2 849.5" stroke="#ececec" stroke-width="2.4"/>
<path d="M1068.8 839 L1063.8 849.5" stroke="#ececec" stroke-width="2.4"/>
<path d="M1074.2 839 L1069.2 849.5" stroke="#ececec" stroke-width="2.4"/>
<path d="M1079.8 839 L1074.8 849.5" stroke="#ececec" stroke-width="2.4"/>
<path d="M1003 852 Q1003 872 1025.3 882.7 Q1047 872 1046.7 852 Z" fill="#e6e6df" stroke="#000" stroke-width="1.8"/>
<path d="M1004 853 H1046 L1043 858 L1039 855 L1035 860 L1030 855 L1025 860 L1020 855 L1015 860 L1010 855 L1006 858 Z" fill="#000"/>
<path d="M1008 868 H1042" stroke="#000" stroke-width="1"/><path d="M1012 869 L1015 874 L1018 869 M1030 869 L1033 874 L1036 869" fill="#000"/>
<g>
<path d="M593 482 Q570 486 562 503.5 Q570 521 593 525.6 Z" fill="#000" stroke="#000" stroke-width="2"/>
<path d="M567 501 L574 496 L574 501 Z M567 506 L574 506 L574 511 Z M578 486.5 L585 486 L581 491 Z M578 520.5 L585 521 L581 516 Z" fill="#e6e6df"/>
<path d="M583 494 V499 M583 508 V513 M588 490 V494 M588 513 V517" stroke="#e6e6df" stroke-width="0.9"/>
<rect x="592.4" y="445" width="15.7" height="118" rx="2" fill="#000"/>
<path d="M597 453 H604 M596 458 H603 M597 549 H604 M596 555 H603 M599 478 H604" stroke="#ddd" stroke-width="1.1"/>
<rect x="623.3" y="447" width="9.7" height="114.3" rx="1.5" fill="#000"/>
<rect x="636.3" y="447" width="13" height="114.3" rx="1.5" fill="#000"/>
<path d="M627 455 H630 M627 461 H630 M640 455 H646 M640 460 H646 M627 546 H630 M640 548 H646 M640 553 H646" stroke="#ddd" stroke-width="1.1"/>
<path d="M607 468.7 H618 L620 463.8 H654 V456 H687 V461.7 H712 V463 L736 461 V455 H740 V463 L760 466 L766 458 V452 H782 V458 L794.3 462 V545 L782 549 V555 H766 V549 L760 541 L740 544 V554 H736 V546 L712 545 V547 H687 V553.8 H654 V544 H620 L618 538.3 H607 Z" fill="#000"/>
<path d="M612.5 473 V494 M612.5 513 V535" stroke="#e6e6df" stroke-width="1.2"/>
<path d="M606 472.6 H618" stroke="#e6e6df" stroke-width="1"/><path d="M606 534.6 H618" stroke="#e6e6df" stroke-width="1"/>
<rect x="659" y="457" width="6" height="11" fill="#e6e6df"/>
<rect x="667" y="462" width="7" height="6" fill="#e6e6df"/>
<rect x="676" y="466" width="6" height="4" fill="#e6e6df"/>
<rect x="659" y="540" width="6" height="11" fill="#e6e6df"/>
<rect x="667" y="540" width="7" height="6" fill="#e6e6df"/>
<rect x="676" y="538" width="6" height="4" fill="#e6e6df"/>
<path d="M664.5 474 V483 M671.5 474 V483 M680.5 474 V483 M688 474 V483 M695.5 474 V483 M664.5 525 V534 M671.5 525 V534 M680.5 525 V534 M688 525 V534 M695.5 525 V534" stroke="#e6e6df" stroke-width="1"/>
<rect x="691.5" y="451" width="18.5" height="14" fill="#e6e6df" stroke="#000" stroke-width="2.2"/>
<path d="M694.5 452 V464 M697 452 V464" stroke="#000" stroke-width="1"/>
<rect x="691.5" y="543" width="18.5" height="14" fill="#e6e6df" stroke="#000" stroke-width="2.2"/>
<path d="M694.5 544 V556 M697 544 V556" stroke="#000" stroke-width="1"/>
<path d="M770 460 V470 M775 460 V474 M780 462 V470 M770 538 V548 M775 534 V548 M747 470 V476 M752 468 V476 M747 531 V538" stroke="#e6e6df" stroke-width="1.1"/>
<path d="M741 464 H747 M741 542 H747" stroke="#e6e6df" stroke-width="1.5"/>
<path d="M791.5 470 V540" stroke="#e6e6df" stroke-width="0.9" stroke-dasharray="2 3"/>
<path d="M795 462.8 L840.3 472 V536 L795 544 Z" fill="#e6e6df" stroke="#000" stroke-width="2.4"/>
<path d="M805.6 464 V543" stroke="#000" stroke-width="2"/>
<path d="M795 500 L806 503 L795 507" fill="none" stroke="#000" stroke-width="1"/>
<path d="M808.3 481.7 L840.8 487.7 L854.4 489.8 V518 L840.8 520.2 L808.3 525.6 Z" fill="#000"/>
<path d="M812 491 H822 M815 496 H826 M812 504 H840 M818 499 H828 M820 512 H828 M836 508 H842" stroke="#e6e6df" stroke-width="0.9"/>
</g>
<g transform="matrix(-1,0,0,1,2065.8,0)">
<path d="M593 482 Q570 486 562 503.5 Q570 521 593 525.6 Z" fill="#000" stroke="#000" stroke-width="2"/>
<path d="M567 501 L574 496 L574 501 Z M567 506 L574 506 L574 511 Z M578 486.5 L585 486 L581 491 Z M578 520.5 L585 521 L581 516 Z" fill="#e6e6df"/>
<path d="M583 494 V499 M583 508 V513 M588 490 V494 M588 513 V517" stroke="#e6e6df" stroke-width="0.9"/>
<rect x="592.4" y="445" width="15.7" height="118" rx="2" fill="#000"/>
<path d="M597 453 H604 M596 458 H603 M597 549 H604 M596 555 H603 M599 478 H604" stroke="#ddd" stroke-width="1.1"/>
<rect x="623.3" y="447" width="9.7" height="114.3" rx="1.5" fill="#000"/>
<rect x="636.3" y="447" width="13" height="114.3" rx="1.5" fill="#000"/>
<path d="M627 455 H630 M627 461 H630 M640 455 H646 M640 460 H646 M627 546 H630 M640 548 H646 M640 553 H646" stroke="#ddd" stroke-width="1.1"/>
<path d="M607 468.7 H618 L620 463.8 H654 V456 H687 V461.7 H712 V463 L736 461 V455 H740 V463 L760 466 L766 458 V452 H782 V458 L794.3 462 V545 L782 549 V555 H766 V549 L760 541 L740 544 V554 H736 V546 L712 545 V547 H687 V553.8 H654 V544 H620 L618 538.3 H607 Z" fill="#000"/>
<path d="M612.5 473 V494 M612.5 513 V535" stroke="#e6e6df" stroke-width="1.2"/>
<path d="M606 472.6 H618" stroke="#e6e6df" stroke-width="1"/><path d="M606 534.6 H618" stroke="#e6e6df" stroke-width="1"/>
<rect x="659" y="457" width="6" height="11" fill="#e6e6df"/>
<rect x="667" y="462" width="7" height="6" fill="#e6e6df"/>
<rect x="676" y="466" width="6" height="4" fill="#e6e6df"/>
<rect x="659" y="540" width="6" height="11" fill="#e6e6df"/>
<rect x="667" y="540" width="7" height="6" fill="#e6e6df"/>
<rect x="676" y="538" width="6" height="4" fill="#e6e6df"/>
<path d="M664.5 474 V483 M671.5 474 V483 M680.5 474 V483 M688 474 V483 M695.5 474 V483 M664.5 525 V534 M671.5 525 V534 M680.5 525 V534 M688 525 V534 M695.5 525 V534" stroke="#e6e6df" stroke-width="1"/>
<rect x="691.5" y="451" width="18.5" height="14" fill="#e6e6df" stroke="#000" stroke-width="2.2"/>
<path d="M694.5 452 V464 M697 452 V464" stroke="#000" stroke-width="1"/>
<rect x="691.5" y="543" width="18.5" height="14" fill="#e6e6df" stroke="#000" stroke-width="2.2"/>
<path d="M694.5 544 V556 M697 544 V556" stroke="#000" stroke-width="1"/>
<path d="M770 460 V470 M775 460 V474 M780 462 V470 M770 538 V548 M775 534 V548 M747 470 V476 M752 468 V476 M747 531 V538" stroke="#e6e6df" stroke-width="1.1"/>
<path d="M741 464 H747 M741 542 H747" stroke="#e6e6df" stroke-width="1.5"/>
<path d="M791.5 470 V540" stroke="#e6e6df" stroke-width="0.9" stroke-dasharray="2 3"/>
<path d="M795 462.8 L840.3 472 V536 L795 544 Z" fill="#e6e6df" stroke="#000" stroke-width="2.4"/>
<path d="M805.6 464 V543" stroke="#000" stroke-width="2"/>
<path d="M795 500 L806 503 L795 507" fill="none" stroke="#000" stroke-width="1"/>
<path d="M808.3 481.7 L840.8 487.7 L854.4 489.8 V518 L840.8 520.2 L808.3 525.6 Z" fill="#000"/>
<path d="M812 491 H822 M815 496 H826 M812 504 H840 M818 499 H828 M820 512 H828 M836 508 H842" stroke="#e6e6df" stroke-width="0.9"/>
</g>
<path d="M1284 467.6 V539.8" stroke="#e6e6df" stroke-width="0.8" stroke-dasharray="2.8 1.1"/>
<path d="M1288 469.3 V538.1" stroke="#e6e6df" stroke-width="0.8" stroke-dasharray="1.6 2.0"/>
<path d="M1293 465.3 V537.5" stroke="#e6e6df" stroke-width="0.8" stroke-dasharray="1.6 1.2"/>
<path d="M1297 468.4 V534.4" stroke="#e6e6df" stroke-width="0.8" stroke-dasharray="1.7 1.4"/>
<path d="M1303 470.0 V533.4" stroke="#e6e6df" stroke-width="0.8" stroke-dasharray="2.7 1.8"/>
<path d="M1309 472.8 V540.6" stroke="#e6e6df" stroke-width="0.8" stroke-dasharray="3.2 1.6"/>
<path d="M1314 466.2 V540.1" stroke="#e6e6df" stroke-width="0.8" stroke-dasharray="2.1 2.6"/>
<path d="M1320 466.4 V536.3" stroke="#e6e6df" stroke-width="0.8" stroke-dasharray="2.8 1.7"/>
<path d="M1336 469.4 V540.5" stroke="#e6e6df" stroke-width="0.8" stroke-dasharray="1.6 1.4"/>
<path d="M1341 470.4 V537.6" stroke="#e6e6df" stroke-width="0.8" stroke-dasharray="2.1 2.2"/>
<path d="M1347 468.6 V538.6" stroke="#e6e6df" stroke-width="0.8" stroke-dasharray="3.1 2.4"/>
<path d="M1352 467.0 V536.4" stroke="#e6e6df" stroke-width="0.8" stroke-dasharray="2.6 2.8"/>
<path d="M1391 470.8 V538.7" stroke="#e6e6df" stroke-width="0.8" stroke-dasharray="3.5 1.2"/>
<path d="M1396 468.3 V534.9" stroke="#e6e6df" stroke-width="0.8" stroke-dasharray="1.8 2.0"/>
<path d="M1401 465.3 V535.7" stroke="#e6e6df" stroke-width="0.8" stroke-dasharray="3.0 2.1"/>
<path d="M1406 472.0 V538.5" stroke="#e6e6df" stroke-width="0.8" stroke-dasharray="2.9 2.2"/>
<path d="M1411 469.6 V537.4" stroke="#e6e6df" stroke-width="0.8" stroke-dasharray="3.2 2.9"/>
<path d="M1420 468.8 V535.7" stroke="#e6e6df" stroke-width="0.8" stroke-dasharray="1.6 2.4"/>
<path d="M1425 470.2 V533.1" stroke="#e6e6df" stroke-width="0.8" stroke-dasharray="3.1 1.6"/>
<path d="M1436 468.1 V535.7" stroke="#e6e6df" stroke-width="0.8" stroke-dasharray="1.5 1.9"/>
<path d="M1439 466.3 V540.1" stroke="#e6e6df" stroke-width="0.8" stroke-dasharray="1.6 2.5"/>
<path d="M1229 485.5 H1257" stroke="#e6e6df" stroke-width="1.1" stroke-dasharray="3 1"/>
<path d="M1229 488.1 H1257" stroke="#e6e6df" stroke-width="1.1" stroke-dasharray="4 1"/>
<path d="M1229 490.7 H1257" stroke="#e6e6df" stroke-width="1.1" stroke-dasharray="5 1"/>
<path d="M1229 493.3 H1257" stroke="#e6e6df" stroke-width="1.1" stroke-dasharray="3 1"/>
<path d="M1229 495.9 H1257" stroke="#e6e6df" stroke-width="1.1" stroke-dasharray="4 1"/>
<path d="M1229 498.5 H1257" stroke="#e6e6df" stroke-width="1.1" stroke-dasharray="5 1"/>
<path d="M1229 501.1 H1257" stroke="#e6e6df" stroke-width="1.1" stroke-dasharray="3 1"/>
<path d="M1229 503.7 H1257" stroke="#e6e6df" stroke-width="1.1" stroke-dasharray="4 1"/>
<path d="M1229 506.3 H1257" stroke="#e6e6df" stroke-width="1.1" stroke-dasharray="5 1"/>
<path d="M1229 508.9 H1257" stroke="#e6e6df" stroke-width="1.1" stroke-dasharray="3 1"/>
<path d="M1229 511.5 H1257" stroke="#e6e6df" stroke-width="1.1" stroke-dasharray="4 1"/>
<path d="M1229 514.1 H1257" stroke="#e6e6df" stroke-width="1.1" stroke-dasharray="5 1"/>
<path d="M1229 516.7 H1257" stroke="#e6e6df" stroke-width="1.1" stroke-dasharray="3 1"/>
<path d="M1229 519.3 H1257" stroke="#e6e6df" stroke-width="1.1" stroke-dasharray="4 1"/>
<path d="M1229 521.9 H1257" stroke="#e6e6df" stroke-width="1.1" stroke-dasharray="5 1"/>
<rect x="1211" y="489" width="16" height="29" rx="3" fill="#000"/>
<path d="M1214 499 H1222 M1214 503.5 H1224 M1214 508 H1222" stroke="#e6e6df" stroke-width="0.9"/>
<rect x="1446.5" y="470.5" width="8" height="66" fill="#e6e6df" stroke="#000" stroke-width="1"/>
<path d="M1449 474 V533 M1452 474 V533" stroke="#000" stroke-width="0.8" stroke-dasharray="3 2"/>
<path d="M1476 486 Q1494 490 1501 503.8 Q1494 518 1476 522 Z" fill="#e6e6df"/>
<path d="M1478 490 L1486 496 L1480 503 L1488 509 L1478 517 M1490 498 L1496 504 L1490 510 M1482 492 V515" fill="none" stroke="#000" stroke-width="1.3" stroke-dasharray="2 1"/>
<path d="M1473 482.3 Q1496 487 1503.8 503.8 Q1496 521 1473 525.6" fill="none" stroke="#000" stroke-width="2.2"/>
<rect x="1285" y="470" width="1.2" height="3" fill="#e6e6df"/>
<rect x="1322" y="523" width="1.2" height="3" fill="#e6e6df"/>
<rect x="1359" y="506" width="1.2" height="3" fill="#e6e6df"/>
<rect x="1396" y="489" width="1.2" height="3" fill="#e6e6df"/>
<rect x="1433" y="472" width="1.2" height="3" fill="#e6e6df"/>
<rect x="1290" y="525" width="1.2" height="3" fill="#e6e6df"/>
<rect x="1327" y="508" width="1.2" height="3" fill="#e6e6df"/>
<rect x="1364" y="491" width="1.2" height="3" fill="#e6e6df"/>
<rect x="1401" y="474" width="1.2" height="3" fill="#e6e6df"/>
<rect x="1438" y="527" width="1.2" height="3" fill="#e6e6df"/>
<rect x="1295" y="510" width="1.2" height="3" fill="#e6e6df"/>
<rect x="1332" y="493" width="1.2" height="3" fill="#e6e6df"/>
<rect x="1369" y="476" width="1.2" height="3" fill="#e6e6df"/>
<rect x="1406" y="529" width="1.2" height="3" fill="#e6e6df"/>
<rect x="1443" y="512" width="1.2" height="3" fill="#e6e6df"/>
<rect x="1300" y="495" width="1.2" height="3" fill="#e6e6df"/>
<rect x="1337" y="478" width="1.2" height="3" fill="#e6e6df"/>
<rect x="1374" y="531" width="1.2" height="3" fill="#e6e6df"/>
<rect x="1411" y="514" width="1.2" height="3" fill="#e6e6df"/>
<rect x="1448" y="497" width="1.2" height="3" fill="#e6e6df"/>
<rect x="1305" y="480" width="1.2" height="3" fill="#e6e6df"/>
<rect x="1342" y="533" width="1.2" height="3" fill="#e6e6df"/>
<rect x="1379" y="516" width="1.2" height="3" fill="#e6e6df"/>
<rect x="1416" y="499" width="1.2" height="3" fill="#e6e6df"/>
<rect x="1453" y="482" width="1.2" height="3" fill="#e6e6df"/>
<rect x="1310" y="535" width="1.2" height="3" fill="#e6e6df"/>
<rect x="1347" y="518" width="1.2" height="3" fill="#e6e6df"/>
<rect x="1384" y="501" width="1.2" height="3" fill="#e6e6df"/>
<rect x="1421" y="484" width="1.2" height="3" fill="#e6e6df"/>
<rect x="1458" y="537" width="1.2" height="3" fill="#e6e6df"/>
<rect x="1315" y="520" width="1.2" height="3" fill="#e6e6df"/>
<rect x="1352" y="503" width="1.2" height="3" fill="#e6e6df"/>
<rect x="1389" y="486" width="1.2" height="3" fill="#e6e6df"/>
<rect x="1426" y="539" width="1.2" height="3" fill="#e6e6df"/>
<rect x="1463" y="522" width="1.2" height="3" fill="#e6e6df"/>
<rect x="1320" y="505" width="1.2" height="3" fill="#e6e6df"/>
<rect x="1357" y="488" width="1.2" height="3" fill="#e6e6df"/>
<rect x="1394" y="471" width="1.2" height="3" fill="#e6e6df"/>
<rect x="1431" y="524" width="1.2" height="3" fill="#e6e6df"/>
<rect x="1288" y="507" width="1.2" height="3" fill="#e6e6df"/>
<path d="M1228 493 H1258 M1228 498 H1258 M1228 503 H1258 M1228 508 H1258 M1228 513 H1258" stroke="#e6e6df" stroke-width="0.8" stroke-dasharray="3 1.5"/>
<circle cx="392" cy="504" r="58.3" fill="#000"/>
<path d="M433.0 504.0 L447.6 510.7" stroke="#ececec" stroke-width="1.3"/>
<path d="M432.6 509.6 L446.2 518.2" stroke="#ececec" stroke-width="1.3"/>
<path d="M431.5 515.1 L443.7 525.5" stroke="#ececec" stroke-width="1.3"/>
<path d="M429.6 520.3 L440.3 532.3" stroke="#ececec" stroke-width="1.3"/>
<path d="M427.0 525.3 L436.0 538.6" stroke="#ececec" stroke-width="1.3"/>
<path d="M423.8 529.9 L430.9 544.3" stroke="#ececec" stroke-width="1.3"/>
<path d="M420.0 534.0 L425.0 549.2" stroke="#ececec" stroke-width="1.3"/>
<path d="M415.6 537.5 L418.6 553.3" stroke="#ececec" stroke-width="1.3"/>
<path d="M410.9 540.4 L411.6 556.4" stroke="#ececec" stroke-width="1.3"/>
<path d="M405.7 542.6 L404.3 558.6" stroke="#ececec" stroke-width="1.3"/>
<path d="M400.3 544.1 L396.7 559.8" stroke="#ececec" stroke-width="1.3"/>
<path d="M394.8 544.9 L389.1 559.9" stroke="#ececec" stroke-width="1.3"/>
<path d="M389.2 544.9 L381.5 559.0" stroke="#ececec" stroke-width="1.3"/>
<path d="M383.7 544.1 L374.1 557.1" stroke="#ececec" stroke-width="1.3"/>
<path d="M378.3 542.6 L367.1 554.1" stroke="#ececec" stroke-width="1.3"/>
<path d="M373.1 540.4 L360.5 550.3" stroke="#ececec" stroke-width="1.3"/>
<path d="M368.4 537.5 L354.5 545.6" stroke="#ececec" stroke-width="1.3"/>
<path d="M364.0 534.0 L349.2 540.1" stroke="#ececec" stroke-width="1.3"/>
<path d="M360.2 529.9 L344.6 533.9" stroke="#ececec" stroke-width="1.3"/>
<path d="M357.0 525.3 L341.0 527.2" stroke="#ececec" stroke-width="1.3"/>
<path d="M354.4 520.3 L338.3 520.0" stroke="#ececec" stroke-width="1.3"/>
<path d="M352.5 515.1 L336.7 512.5" stroke="#ececec" stroke-width="1.3"/>
<path d="M351.4 509.6 L336.0 504.9" stroke="#ececec" stroke-width="1.3"/>
<path d="M351.0 504.0 L336.4 497.3" stroke="#ececec" stroke-width="1.3"/>
<path d="M351.4 498.4 L337.8 489.8" stroke="#ececec" stroke-width="1.3"/>
<path d="M352.5 492.9 L340.3 482.5" stroke="#ececec" stroke-width="1.3"/>
<path d="M354.4 487.7 L343.7 475.7" stroke="#ececec" stroke-width="1.3"/>
<path d="M357.0 482.7 L348.0 469.4" stroke="#ececec" stroke-width="1.3"/>
<path d="M360.2 478.1 L353.1 463.7" stroke="#ececec" stroke-width="1.3"/>
<path d="M364.0 474.0 L359.0 458.8" stroke="#ececec" stroke-width="1.3"/>
<path d="M368.4 470.5 L365.4 454.7" stroke="#ececec" stroke-width="1.3"/>
<path d="M373.1 467.6 L372.4 451.6" stroke="#ececec" stroke-width="1.3"/>
<path d="M378.3 465.4 L379.7 449.4" stroke="#ececec" stroke-width="1.3"/>
<path d="M383.7 463.9 L387.3 448.2" stroke="#ececec" stroke-width="1.3"/>
<path d="M389.2 463.1 L394.9 448.1" stroke="#ececec" stroke-width="1.3"/>
<path d="M394.8 463.1 L402.5 449.0" stroke="#ececec" stroke-width="1.3"/>
<path d="M400.3 463.9 L409.9 450.9" stroke="#ececec" stroke-width="1.3"/>
<path d="M405.7 465.4 L416.9 453.9" stroke="#ececec" stroke-width="1.3"/>
<path d="M410.9 467.6 L423.5 457.7" stroke="#ececec" stroke-width="1.3"/>
<path d="M415.6 470.5 L429.5 462.4" stroke="#ececec" stroke-width="1.3"/>
<path d="M420.0 474.0 L434.8 467.9" stroke="#ececec" stroke-width="1.3"/>
<path d="M423.8 478.1 L439.4 474.1" stroke="#ececec" stroke-width="1.3"/>
<path d="M427.0 482.7 L443.0 480.8" stroke="#ececec" stroke-width="1.3"/>
<path d="M429.6 487.7 L445.7 488.0" stroke="#ececec" stroke-width="1.3"/>
<path d="M431.5 492.9 L447.3 495.5" stroke="#ececec" stroke-width="1.3"/>
<path d="M432.6 498.4 L448.0 503.1" stroke="#ececec" stroke-width="1.3"/>
<rect x="416.0" y="504.0" width="1.1" height="1.1" fill="#ddd"/>
<rect x="422.6" y="508.8" width="1.1" height="1.1" fill="#ddd"/>
<rect x="428.2" y="515.6" width="1.1" height="1.1" fill="#ddd"/>
<rect x="419.6" y="513.0" width="1.1" height="1.1" fill="#ddd"/>
<rect x="424.1" y="520.3" width="1.1" height="1.1" fill="#ddd"/>
<rect x="413.9" y="519.8" width="1.1" height="1.1" fill="#ddd"/>
<rect x="419.5" y="524.0" width="1.1" height="1.1" fill="#ddd"/>
<rect x="409.7" y="521.6" width="1.1" height="1.1" fill="#ddd"/>
<rect x="410.9" y="529.8" width="1.1" height="1.1" fill="#ddd"/>
<rect x="414.9" y="535.6" width="1.1" height="1.1" fill="#ddd"/>
<rect x="405.7" y="530.7" width="1.1" height="1.1" fill="#ddd"/>
<rect x="403.6" y="539.1" width="1.1" height="1.1" fill="#ddd"/>
<rect x="400.7" y="530.6" width="1.1" height="1.1" fill="#ddd"/>
<rect x="397.6" y="538.6" width="1.1" height="1.1" fill="#ddd"/>
<rect x="392.1" y="530.0" width="1.1" height="1.1" fill="#ddd"/>
<rect x="392.0" y="537.0" width="1.1" height="1.1" fill="#ddd"/>
<rect x="388.3" y="527.7" width="1.1" height="1.1" fill="#ddd"/>
<rect x="382.6" y="533.5" width="1.1" height="1.1" fill="#ddd"/>
<rect x="380.3" y="540.1" width="1.1" height="1.1" fill="#ddd"/>
<rect x="378.9" y="529.9" width="1.1" height="1.1" fill="#ddd"/>
<rect x="371.0" y="533.2" width="1.1" height="1.1" fill="#ddd"/>
<rect x="376.1" y="525.8" width="1.1" height="1.1" fill="#ddd"/>
<rect x="368.0" y="528.1" width="1.1" height="1.1" fill="#ddd"/>
<rect x="371.8" y="518.8" width="1.1" height="1.1" fill="#ddd"/>
<rect x="366.1" y="522.8" width="1.1" height="1.1" fill="#ddd"/>
<rect x="357.3" y="521.8" width="1.1" height="1.1" fill="#ddd"/>
<rect x="363.5" y="513.4" width="1.1" height="1.1" fill="#ddd"/>
<rect x="356.8" y="515.4" width="1.1" height="1.1" fill="#ddd"/>
<rect x="364.4" y="508.4" width="1.1" height="1.1" fill="#ddd"/>
<rect x="357.0" y="504.2" width="1.1" height="1.1" fill="#ddd"/>
<rect x="366.0" y="504.0" width="1.1" height="1.1" fill="#ddd"/>
<rect x="359.4" y="498.9" width="1.1" height="1.1" fill="#ddd"/>
<rect x="369.1" y="496.7" width="1.1" height="1.1" fill="#ddd"/>
<rect x="362.5" y="494.4" width="1.1" height="1.1" fill="#ddd"/>
<rect x="358.1" y="486.8" width="1.1" height="1.1" fill="#ddd"/>
<rect x="368.5" y="487.1" width="1.1" height="1.1" fill="#ddd"/>
<rect x="362.9" y="482.8" width="1.1" height="1.1" fill="#ddd"/>
<rect x="372.9" y="485.0" width="1.1" height="1.1" fill="#ddd"/>
<rect x="371.9" y="476.6" width="1.1" height="1.1" fill="#ddd"/>
<rect x="377.3" y="483.8" width="1.1" height="1.1" fill="#ddd"/>
<rect x="377.4" y="475.5" width="1.1" height="1.1" fill="#ddd"/>
<rect x="379.8" y="467.0" width="1.1" height="1.1" fill="#ddd"/>
<rect x="382.7" y="475.5" width="1.1" height="1.1" fill="#ddd"/>
<rect x="386.1" y="467.5" width="1.1" height="1.1" fill="#ddd"/>
<rect x="391.9" y="476.0" width="1.1" height="1.1" fill="#ddd"/>
<rect x="392.0" y="469.0" width="1.1" height="1.1" fill="#ddd"/>
<rect x="396.0" y="478.3" width="1.1" height="1.1" fill="#ddd"/>
<rect x="402.0" y="472.6" width="1.1" height="1.1" fill="#ddd"/>
<rect x="399.4" y="481.2" width="1.1" height="1.1" fill="#ddd"/>
<rect x="406.0" y="476.3" width="1.1" height="1.1" fill="#ddd"/>
<rect x="414.2" y="473.2" width="1.1" height="1.1" fill="#ddd"/>
<rect x="409.0" y="480.5" width="1.1" height="1.1" fill="#ddd"/>
<rect x="417.4" y="478.5" width="1.1" height="1.1" fill="#ddd"/>
<rect x="413.8" y="488.0" width="1.1" height="1.1" fill="#ddd"/>
<rect x="419.5" y="484.0" width="1.1" height="1.1" fill="#ddd"/>
<rect x="414.2" y="492.6" width="1.1" height="1.1" fill="#ddd"/>
<rect x="422.4" y="494.0" width="1.1" height="1.1" fill="#ddd"/>
<rect x="429.1" y="491.9" width="1.1" height="1.1" fill="#ddd"/>
<rect x="421.6" y="499.2" width="1.1" height="1.1" fill="#ddd"/>
<rect x="429.0" y="503.8" width="1.1" height="1.1" fill="#ddd"/>
<circle cx="392" cy="504" r="19.4" fill="#e6e6df"/>
<circle cx="392" cy="504" r="16" fill="#e6e6df" stroke="#000" stroke-width="1.8"/>
<circle cx="405.4" cy="508.1" r="1.6" fill="#000"/>
<circle cx="395.1" cy="517.7" r="1.6" fill="#000"/>
<circle cx="381.7" cy="513.5" r="1.6" fill="#000"/>
<circle cx="378.6" cy="499.9" r="1.6" fill="#000"/>
<circle cx="388.9" cy="490.3" r="1.6" fill="#000"/>
<circle cx="402.3" cy="494.5" r="1.6" fill="#000"/>
<circle cx="392" cy="504" r="0.9" fill="#000"/>
<circle cx="1025" cy="503.8" r="55.6" fill="none" stroke="#000" stroke-width="6.3"/>
<circle cx="1025" cy="503.8" r="55.6" fill="none" stroke="#ddd" stroke-width="1.1" stroke-dasharray="1 6"/>
<circle cx="1025" cy="503.8" r="58.6" fill="none" stroke="#000" stroke-width="1.2" stroke-dasharray="3 2.5"/>
<circle cx="1025" cy="503.8" r="50.5" fill="none" stroke="#000" stroke-width="1.3"/>
<circle cx="1025" cy="503.8" r="48" fill="none" stroke="#000" stroke-width="1.1"/>
<circle cx="1025" cy="503.8" r="45.5" fill="none" stroke="#000" stroke-width="1.1"/>
<circle cx="1025" cy="503.8" r="43.5" fill="none" stroke="#000" stroke-width="1.1"/>
<circle cx="1025" cy="503.8" r="32.8" fill="none" stroke="#000" stroke-width="1.3"/>
<circle cx="1025" cy="503.8" r="30.5" fill="none" stroke="#000" stroke-width="1.3"/>
<circle cx="1025" cy="503.8" r="22.5" fill="#000"/>
<path d="M1035.0 503.8 L1045.5 503.8" stroke="#e8e8e4" stroke-width="1.1"/>
<path d="M1034.8 505.8 L1045.1 507.8" stroke="#e8e8e4" stroke-width="1.1"/>
<path d="M1034.2 507.6 L1043.9 511.6" stroke="#e8e8e4" stroke-width="1.1"/>
<path d="M1033.3 509.4 L1042.0 515.2" stroke="#e8e8e4" stroke-width="1.1"/>
<path d="M1032.1 510.9 L1039.5 518.3" stroke="#e8e8e4" stroke-width="1.1"/>
<path d="M1030.6 512.1 L1036.4 520.8" stroke="#e8e8e4" stroke-width="1.1"/>
<path d="M1028.8 513.0 L1032.8 522.7" stroke="#e8e8e4" stroke-width="1.1"/>
<path d="M1027.0 513.6 L1029.0 523.9" stroke="#e8e8e4" stroke-width="1.1"/>
<path d="M1025.0 513.8 L1025.0 524.3" stroke="#e8e8e4" stroke-width="1.1"/>
<path d="M1023.0 513.6 L1021.0 523.9" stroke="#e8e8e4" stroke-width="1.1"/>
<path d="M1021.2 513.0 L1017.2 522.7" stroke="#e8e8e4" stroke-width="1.1"/>
<path d="M1019.4 512.1 L1013.6 520.8" stroke="#e8e8e4" stroke-width="1.1"/>
<path d="M1017.9 510.9 L1010.5 518.3" stroke="#e8e8e4" stroke-width="1.1"/>
<path d="M1016.7 509.4 L1008.0 515.2" stroke="#e8e8e4" stroke-width="1.1"/>
<path d="M1015.8 507.6 L1006.1 511.6" stroke="#e8e8e4" stroke-width="1.1"/>
<path d="M1015.2 505.8 L1004.9 507.8" stroke="#e8e8e4" stroke-width="1.1"/>
<path d="M1015.0 503.8 L1004.5 503.8" stroke="#e8e8e4" stroke-width="1.1"/>
<path d="M1015.2 501.8 L1004.9 499.8" stroke="#e8e8e4" stroke-width="1.1"/>
<path d="M1015.8 500.0 L1006.1 496.0" stroke="#e8e8e4" stroke-width="1.1"/>
<path d="M1016.7 498.2 L1008.0 492.4" stroke="#e8e8e4" stroke-width="1.1"/>
<path d="M1017.9 496.7 L1010.5 489.3" stroke="#e8e8e4" stroke-width="1.1"/>
<path d="M1019.4 495.5 L1013.6 486.8" stroke="#e8e8e4" stroke-width="1.1"/>
<path d="M1021.2 494.6 L1017.2 484.9" stroke="#e8e8e4" stroke-width="1.1"/>
<path d="M1023.0 494.0 L1021.0 483.7" stroke="#e8e8e4" stroke-width="1.1"/>
<path d="M1025.0 493.8 L1025.0 483.3" stroke="#e8e8e4" stroke-width="1.1"/>
<path d="M1027.0 494.0 L1029.0 483.7" stroke="#e8e8e4" stroke-width="1.1"/>
<path d="M1028.8 494.6 L1032.8 484.9" stroke="#e8e8e4" stroke-width="1.1"/>
<path d="M1030.6 495.5 L1036.4 486.8" stroke="#e8e8e4" stroke-width="1.1"/>
<path d="M1032.1 496.7 L1039.5 489.3" stroke="#e8e8e4" stroke-width="1.1"/>
<path d="M1033.3 498.2 L1042.0 492.4" stroke="#e8e8e4" stroke-width="1.1"/>
<path d="M1034.2 500.0 L1043.9 496.0" stroke="#e8e8e4" stroke-width="1.1"/>
<path d="M1034.8 501.8 L1045.1 499.8" stroke="#e8e8e4" stroke-width="1.1"/>
<circle cx="1025" cy="503.8" r="9" fill="#000"/>
<circle cx="1025" cy="503.8" r="5.6" fill="#e6e6df"/>
<g transform="translate(1265.4,310.4) rotate(-31)">
<ellipse cx="192" cy="6" rx="32.2" ry="52" fill="none" stroke="#000" stroke-width="19" stroke-dasharray="3.6 2.0"/>
<ellipse cx="192" cy="6" rx="38.1" ry="61.5" fill="none" stroke="#000" stroke-width="1.5" stroke-dasharray="3 1"/>
<ellipse cx="186" cy="5" rx="26.7" ry="43" fill="#e6e6df" stroke="#000" stroke-width="4" />
<ellipse cx="176" cy="0" rx="28.5" ry="46" fill="#e6e6df" stroke="#000" stroke-width="3" />
<ellipse cx="170" cy="0" rx="29.8" ry="48" fill="none" stroke="#000" stroke-width="6" />
<ellipse cx="163" cy="0" rx="29.1" ry="47" fill="#e6e6df" stroke="#000" stroke-width="2" />
<ellipse cx="152" cy="-2" rx="27.3" ry="44" fill="none" stroke="#000" stroke-width="11" stroke-dasharray="3.2 1.8"/>
<ellipse cx="152" cy="-2" rx="31.0" ry="50" fill="none" stroke="#000" stroke-width="2.5" />
<ellipse cx="143" cy="-3" rx="27.9" ry="45" fill="#e6e6df" stroke="#000" stroke-width="3" />
<ellipse cx="136" cy="-4" rx="26.7" ry="43" fill="#e6e6df" stroke="#000" stroke-width="1.5" />
<ellipse cx="130" cy="-5" rx="26.0" ry="42" fill="#e6e6df" stroke="#000" stroke-width="3" />
<ellipse cx="124" cy="-5" rx="25.4" ry="41" fill="#e6e6df" stroke="#000" stroke-width="1.2" />
<ellipse cx="119" cy="-5" rx="25.4" ry="41" fill="#e6e6df" stroke="#000" stroke-width="1.2" />
<ellipse cx="112" cy="-5" rx="26.0" ry="42" fill="#e6e6df" stroke="#000" stroke-width="3" />
<ellipse cx="104" cy="-5" rx="26.7" ry="43" fill="#e6e6df" stroke="#000" stroke-width="1.5" />
<ellipse cx="90" cy="-4" rx="26.7" ry="43" fill="none" stroke="#000" stroke-width="10" stroke-dasharray="2.6 1.8"/>
<ellipse cx="90" cy="-4" rx="30.1" ry="48.5" fill="none" stroke="#000" stroke-width="2.5" />
<ellipse cx="83" cy="-3" rx="28.5" ry="46" fill="#e6e6df" stroke="#000" stroke-width="2.5" />
<ellipse cx="76" cy="-3" rx="28.5" ry="46" fill="#e6e6df" stroke="#000" stroke-width="3.5" />
<ellipse cx="69" cy="-2" rx="29.8" ry="48" fill="#e6e6df" stroke="#000" stroke-width="1.5" />
<ellipse cx="63" cy="-1" rx="31.6" ry="51" fill="none" stroke="#000" stroke-width="7" />
<ellipse cx="52" cy="0" rx="31.6" ry="51" fill="#e6e6df" stroke="#000" stroke-width="2.2" />
<ellipse cx="46" cy="0" rx="30.4" ry="49" fill="#e6e6df" stroke="#000" stroke-width="1.5" />
<ellipse cx="41" cy="0" rx="28.5" ry="46" fill="none" stroke="#000" stroke-width="7" stroke-dasharray="2.2 2"/>
<ellipse cx="35" cy="0" rx="29.1" ry="47" fill="#e6e6df" stroke="#000" stroke-width="1.8" />
<path d="M33 -47 L0 -33 L0 33 L33 47 Z" fill="#e6e6df"/>
<path d="M33 -47 L0 -33 M0 33 L33 47" stroke="#000" stroke-width="1.8"/>
<ellipse cx="0" cy="0" rx="20.5" ry="33" fill="#e6e6df" stroke="#000" stroke-width="2.6" />
<ellipse cx="0" cy="0" rx="18.6" ry="30" fill="none" stroke="#000" stroke-width="1.2" />
<ellipse cx="0" cy="0" rx="18.9" ry="30.5" fill="#000" stroke="#000" stroke-width="0" />
</g>
<path d="M1246.5 292.9 L1255.8 285.6 L1266.3 291.9 L1250.6 306.5 Z M1247.5 308.5 L1260 305.4 L1261 324.2 L1255.8 325.2 L1248.5 319 Z M1262 325.2 L1281.9 320 L1278.75 332.5 L1269.4 335.6 Z" fill="#e6e6df"/>
<path d="M1266.0 297.0 L1283.0 292.0" stroke="#ccc" stroke-width="0.7"/>
<path d="M1266.2 300.2 L1282.9 295.5" stroke="#ccc" stroke-width="0.7"/>
<path d="M1266.5 303.5 L1282.8 299.0" stroke="#ccc" stroke-width="0.7"/>
<path d="M1266.8 306.8 L1282.6 302.5" stroke="#ccc" stroke-width="0.7"/>
<path d="M1267.0 310.0 L1282.5 306.0" stroke="#ccc" stroke-width="0.7"/>
<path d="M1267.2 313.2 L1282.4 309.5" stroke="#ccc" stroke-width="0.7"/>
<path d="M1267.5 316.5 L1282.2 313.0" stroke="#ccc" stroke-width="0.7"/>
<path d="M1267.8 319.8 L1282.1 316.5" stroke="#ccc" stroke-width="0.7"/>
<path d="M1268.0 323.0 L1282.0 320.0" stroke="#ccc" stroke-width="0.7"/>
<g transform="translate(1265.4,310.4) rotate(-31)">
<ellipse cx="0" cy="0" rx="20.5" ry="33" fill="none" stroke="#000" stroke-width="2.6" />
</g>
<rect x="1394" y="1008" width="214" height="65" fill="#c3c3c1" />
<rect x="1397.5" y="1011.5" width="36.5" height="16.5" fill="#e6e6df" />
<rect x="1438" y="1011.5" width="52" height="16.5" fill="#e6e6df" />
<rect x="1494" y="1011.5" width="18" height="16.5" fill="#e6e6df" />
<rect x="1516" y="1011.7" width="58" height="4.2999999999999545" fill="#e6e6df" />
<rect x="1578" y="1011.7" width="30" height="4.2999999999999545" fill="#e6e6df" />
<rect x="1516" y="1019.8" width="92" height="8.200000000000045" fill="#e6e6df" />
<rect x="1516" y="1032" width="92" height="22" fill="#e6e6df" />
<rect x="1516" y="1058" width="77" height="11" fill="#e6e6df" />
<rect x="1597" y="1058" width="10" height="6" fill="#e6e6df" />
<rect x="1463" y="1058" width="49" height="11" fill="#e6e6df" />
<path d="M1398 1032.5 H1406" stroke="#ecece8" stroke-width="1"/>
<path d="M1408 1032.5 H1426" stroke="#ecece8" stroke-width="1"/>
<path d="M1430 1032.5 H1447" stroke="#ecece8" stroke-width="1"/>
<path d="M1450 1032.5 H1460" stroke="#ecece8" stroke-width="1"/>
<path d="M1463 1032.5 H1470" stroke="#ecece8" stroke-width="1"/>
<path d="M1475 1032.5 H1490" stroke="#ecece8" stroke-width="1"/>
<path d="M1494 1032.5 H1512" stroke="#ecece8" stroke-width="1"/>
<path d="M1398 1038 H1406" stroke="#ecece8" stroke-width="1"/>
<path d="M1408 1038 H1426" stroke="#ecece8" stroke-width="1"/>
<path d="M1430 1038 H1447" stroke="#ecece8" stroke-width="1"/>
<path d="M1450 1038 H1460" stroke="#ecece8" stroke-width="1"/>
<path d="M1463 1038 H1470" stroke="#ecece8" stroke-width="1"/>
<path d="M1475 1038 H1490" stroke="#ecece8" stroke-width="1"/>
<path d="M1494 1038 H1512" stroke="#ecece8" stroke-width="1"/>
<path d="M1398 1043.5 H1406" stroke="#ecece8" stroke-width="1"/>
<path d="M1408 1043.5 H1426" stroke="#ecece8" stroke-width="1"/>
<path d="M1430 1043.5 H1447" stroke="#ecece8" stroke-width="1"/>
<path d="M1450 1043.5 H1460" stroke="#ecece8" stroke-width="1"/>
<path d="M1463 1043.5 H1470" stroke="#ecece8" stroke-width="1"/>
<path d="M1475 1043.5 H1490" stroke="#ecece8" stroke-width="1"/>
<path d="M1494 1043.5 H1512" stroke="#ecece8" stroke-width="1"/>
<path d="M1398 1048.5 H1406" stroke="#ecece8" stroke-width="1"/>
<path d="M1408 1048.5 H1426" stroke="#ecece8" stroke-width="1"/>
<path d="M1430 1048.5 H1447" stroke="#ecece8" stroke-width="1"/>
<path d="M1450 1048.5 H1460" stroke="#ecece8" stroke-width="1"/>
<path d="M1463 1048.5 H1470" stroke="#ecece8" stroke-width="1"/>
<path d="M1475 1048.5 H1490" stroke="#ecece8" stroke-width="1"/>
<path d="M1494 1048.5 H1512" stroke="#ecece8" stroke-width="1"/>
<path d="M1398 1053.5 H1406" stroke="#ecece8" stroke-width="1"/>
<path d="M1408 1053.5 H1426" stroke="#ecece8" stroke-width="1"/>
<path d="M1430 1053.5 H1447" stroke="#ecece8" stroke-width="1"/>
<path d="M1450 1053.5 H1460" stroke="#ecece8" stroke-width="1"/>
<path d="M1463 1053.5 H1470" stroke="#ecece8" stroke-width="1"/>
<path d="M1475 1053.5 H1490" stroke="#ecece8" stroke-width="1"/>
<path d="M1494 1053.5 H1512" stroke="#ecece8" stroke-width="1"/>
<path d="M1398 1058.5 H1406" stroke="#ecece8" stroke-width="1"/>
<path d="M1408 1058.5 H1426" stroke="#ecece8" stroke-width="1"/>
<path d="M1430 1058.5 H1447" stroke="#ecece8" stroke-width="1"/>
<path d="M1450 1058.5 H1460" stroke="#ecece8" stroke-width="1"/>
<path d="M1398 1063.5 H1406" stroke="#ecece8" stroke-width="1"/>
<path d="M1408 1063.5 H1426" stroke="#ecece8" stroke-width="1"/>
<path d="M1430 1063.5 H1447" stroke="#ecece8" stroke-width="1"/>
<path d="M1450 1063.5 H1460" stroke="#ecece8" stroke-width="1"/>
<path d="M1398 1068.5 H1406" stroke="#ecece8" stroke-width="1"/>
<path d="M1408 1068.5 H1426" stroke="#ecece8" stroke-width="1"/>
<path d="M1430 1068.5 H1447" stroke="#ecece8" stroke-width="1"/>
<path d="M1450 1068.5 H1460" stroke="#ecece8" stroke-width="1"/>
<text x="1556" y="1067" font-family="Liberation Sans" font-size="11" text-anchor="middle" fill="#333" textLength="27" lengthAdjust="spacingAndGlyphs">main</text>
<g font-family="Liberation Sans" font-size="3.5" fill="#444">
<text x="1399" y="1015">XXXXXXXXXX XXXX XXX</text><text x="1399" y="1019">XXXXX XXX</text><text x="1399" y="1022">XXXXXXX</text><text x="1495" y="1014">XXXXX</text><text x="1495" y="1017">XXXX XX</text>
<text x="1530" y="1015">XXXXXXXXXXXX</text><text x="1582" y="1015">XXXX</text><text x="1599" y="1063">A3</text>
</g>
</svg>
<!-- taskbar -->
<div id="taskbar" class="a"></div>
<div id="search" class="a"></div>
<svg style="left:0;top:1160px" width="1920" height="40">
 <!-- windows logo -->
 <g fill="#fff">
  <path d="M16 13.5 L22.8 12.6 V19.3 H16 Z"/><path d="M23.8 12.4 L32 11.3 V19.3 H23.8 Z"/>
  <path d="M16 20.3 H22.8 V27 L16 26.1 Z"/><path d="M23.8 20.3 H32 V28.2 L23.8 27.1 Z"/>
 </g>
 <rect x="48" y="0" width="344" height="40" fill="#f0f0f0"/>
 <path d="M48 0.5 H392" stroke="#d6d6d6"/>
 <circle cx="68.8" cy="17.8" r="5.3" fill="none" stroke="#222" stroke-width="1.3"/>
 <path d="M65 21.6 L60 26.8" stroke="#222" stroke-width="1.4"/>
 <text x="88" y="25.5" font-family="Liberation Sans" font-size="15" fill="#3a3a3a" textLength="128" lengthAdjust="spacingAndGlyphs">Type here to search</text>
 <!-- cortana -->
 <circle cx="416" cy="20" r="7" fill="none" stroke="#fff" stroke-width="1.8"/>
 <!-- task view -->
 <g fill="none" stroke="#fff" stroke-width="1.3">
  <rect x="458.5" y="14.5" width="9" height="10"/>
  <path d="M456 12.5 H470 M456 26.5 H470 M472 14 V18 M472 21 V25"/>
 </g>
 <!-- edge -->
 <circle cx="515" cy="20" r="11.5" fill="#1f8fd8"/>
 <path d="M504 22 Q506 9 517 9 Q527 9 527 18 Q527 24 519 24 H511 Q512 29 519 30 Q524 30 526 28 Q522 33 515 32 Q504 31 504 22 Z" fill="#3fc56b"/>
 <path d="M507 21 Q510 15 516 15 Q522 15 522 19 H510 Q509 27 517 29 Q509 30 507 21 Z" fill="#1464b4"/>
 <!-- explorer -->
 <path d="M553 9 H561 L563 11.5 H575 V29.5 H553 Z" fill="#e8b830"/>
 <rect x="553" y="14" width="22" height="15.5" fill="#f6cf56"/>
 <rect x="560" y="21" width="8" height="8" fill="#2f7fd0"/>
 <rect x="562" y="23" width="4" height="3" fill="#9fd0ff"/>
 <rect x="544" y="37.5" width="40" height="2.5" fill="#78b6e8"/>
 <!-- store -->
 <path d="M601.5 15 H624.5 V30 Q624.5 31 623.5 31 H602.5 Q601.5 31 601.5 30 Z" fill="#fff"/>
 <path d="M607 15 V12 Q607 8.5 613 8.5 Q619 8.5 619 12 V15" fill="none" stroke="#fff" stroke-width="1.5"/>
 <rect x="607.5" y="17.5" width="5" height="5" fill="#f25022"/><rect x="613.5" y="17.5" width="5" height="5" fill="#7fba00"/>
 <rect x="607.5" y="23.5" width="5" height="5" fill="#00a4ef"/><rect x="613.5" y="23.5" width="5" height="5" fill="#ffb900"/>
 <!-- mail -->
 <path d="M649.5 16 L662 8.5 L674.5 16 V30.5 H649.5 Z" fill="#1f84d6"/>
 <path d="M649.5 16 H674.5 L662 23.5 Z" fill="#fff"/>
 <path d="M649.5 30.5 L662 21 L674.5 30.5 Z" fill="#3aa0ee"/>
 <!-- cmd -->
 <rect x="699" y="11" width="22" height="17" fill="#111" stroke="#888" stroke-width="1"/>
 <rect x="699" y="11" width="22" height="3" fill="#ccc"/>
 <path d="M702 18 H706 M708 22 H716" stroke="#ddd" stroke-width="1"/>
 <rect x="691" y="37.5" width="41" height="2.5" fill="#78b6e8"/>
 <!-- hexagon app -->
 <path d="M759.5 8 L770 14 V26 L759.5 32 L749 26 V14 Z" fill="#243050" stroke="#8a98b0" stroke-width="1"/>
 <path d="M753 26 L766 14" stroke="#8ab4ff" stroke-width="1.3"/>
 <rect x="740" y="37.5" width="40" height="2.5" fill="#78b6e8"/>
 <!-- blue window app -->
 <rect x="798.5" y="12" width="21" height="15" fill="#f0f4f8" stroke="#a8b8c8"/>
 <rect x="803" y="13.5" width="12" height="12" fill="#2a84e0"/>
 <rect x="789" y="37.5" width="40" height="2.5" fill="#78b6e8"/>
 <!-- SW 2021 -->
 <path d="M848 12 L858 8 L869 12 V26 L858 31 L848 26 Z" fill="#d42a2a"/>
 <text x="849" y="24" font-family="Liberation Sans" font-size="10" font-weight="bold" fill="#fff">S</text>
 <text x="857" y="21" font-family="Liberation Sans" font-size="9" font-weight="bold" fill="#fff">W</text>
 <text x="851" y="31" font-family="Liberation Sans" font-size="7.5" font-weight="bold" fill="#fff">2021</text>
 <rect x="838" y="37.5" width="41" height="2.5" fill="#78b6e8"/>
 <!-- tray -->
 <path d="M1689.5 23.5 L1695.5 17.5 L1701.5 23.5" fill="none" stroke="#fff" stroke-width="1.2"/>
 <path d="M1711 12 L1718.5 9.5 L1726 12 V19 L1718.5 23 L1711 19 Z" fill="#c8202a"/>
 <text x="1712.5" y="19" font-family="Liberation Sans" font-size="6" font-weight="bold" fill="#fff">SW</text>
 <path d="M1713 22 L1717 26.5 L1726 16" fill="none" stroke="#30c040" stroke-width="2.2"/>
 <rect x="1738.5" y="15.5" width="7" height="8" rx="1" fill="none" stroke="#fff" stroke-width="1.2"/>
 <path d="M1745.5 18 L1749 16.5 V22.5 L1745.5 21" fill="none" stroke="#fff" stroke-width="1.1"/>
 <path d="M1739 12.5 Q1743 10.5 1747 12.5 M1739 27.5 Q1743 29.5 1747 27.5" fill="none" stroke="#fff" stroke-width="1"/>
 <rect x="1761.5" y="14.5" width="13" height="9" fill="none" stroke="#fff" stroke-width="1.1"/>
 <path d="M1764 24 V27.5 M1761 27.5 H1769 M1759 14 H1763 V18 H1759 Z" fill="none" stroke="#fff" stroke-width="1"/>
 <path d="M1783 17 H1786 L1790 13.5 V26.5 L1786 23 H1783 Z" fill="none" stroke="#fff" stroke-width="1.1"/>
 <path d="M1792.5 17.5 L1797 22 M1797 17.5 L1792.5 22" stroke="#fff" stroke-width="1.1"/>
 <text x="1835" y="15" font-family="Liberation Sans" font-size="12" fill="#fff" text-anchor="middle">3:57 PM</text>
 <text x="1835" y="33" font-family="Liberation Sans" font-size="12" fill="#fff" text-anchor="middle">2/16/2021</text>
 <path d="M1880 12 H1895 V24 H1887 L1884 27 V24 H1880 Z" fill="#fff"/>
 <path d="M1883 15.5 H1892 M1883 18.5 H1892 M1883 21 H1890" stroke="#444" stroke-width="0.9"/>
 <circle cx="1894" cy="27" r="6.5" fill="#3a3c40" stroke="#bbb" stroke-width="1"/>
 <text x="1894" y="31" font-family="Liberation Sans" font-size="10" font-weight="bold" fill="#fff" text-anchor="middle">2</text>
 <path d="M1915.5 0 V40" stroke="#6a6c70" stroke-width="1"/>
</svg>

</body></html>
